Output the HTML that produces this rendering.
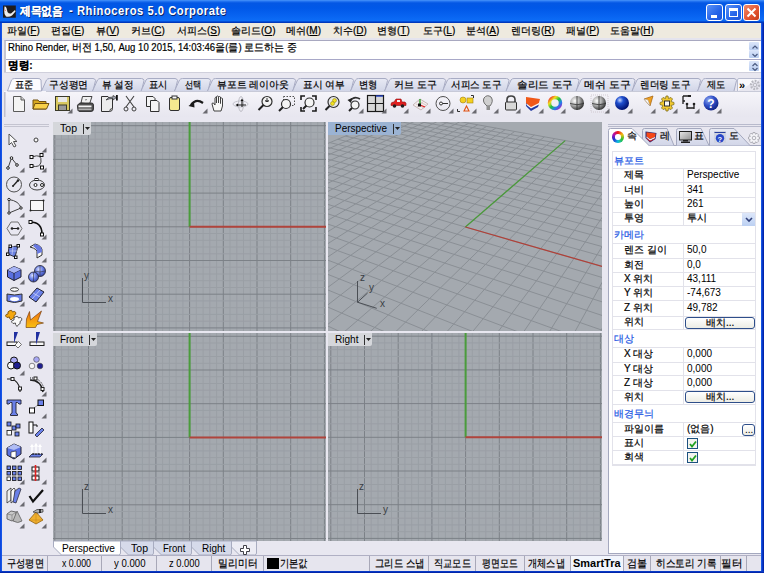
<!DOCTYPE html><html><head><meta charset="utf-8"><style>
*{margin:0;padding:0;box-sizing:border-box}
html,body{width:764px;height:573px;overflow:hidden;background:#0B4FD8;font-family:"Liberation Sans",sans-serif;font-size:11px;color:#000}
.a{position:absolute}
.t{position:absolute;white-space:nowrap;line-height:12px}
.h{-webkit-text-stroke:0.2px currentColor}
.k{font-size:10px}
svg{position:absolute;overflow:visible}
</style></head><body>
<div class="a" style="left:0px;top:0px;width:764px;height:23px;background:linear-gradient(#4C98FA 0px,#2A7AF4 1px,#0357E4 3px,#0058E8 8px,#0762F0 15px,#0C6CF6 20.5px,#0040C8 22px,#0030B0 23px)"></div>
<svg style="left:3px;top:5px" width="13" height="13" viewBox="0 0 13 13"><rect x="0" y="0.5" width="12.8" height="12.2" fill="#201C1C"/><path d="M1.5 1.5 Q3 1 3.5 3 L4.5 7 Q6 9 8 8.5 L12 5 L12.5 6.5 L9 10.5 Q6 12.5 3 11.5 Q1 10 1.2 6 Z" fill="#EDEDED"/><path d="M1.5 5 L3 5.5" stroke="#E06060" stroke-width="0.8"/></svg>
<div class="t h" id="f0" style="left:20px;top:4px;color:#fff;font-weight:bold;font-size:12px;text-shadow:1px 1px 0 #0A246A;line-height:14px;transform:scaleX(0.8958);transform-origin:0 0;">제목없음</div>
<div class="t" id="f1" style="left:68.5px;top:4px;color:#fff;font-weight:bold;font-size:12.5px;letter-spacing:0.6px;text-shadow:1px 1px 0 #0A246A;line-height:14px;transform:scaleX(0.8946);transform-origin:0 0;">- Rhinoceros 5.0 Corporate</div>
<div class="a" style="left:706px;top:4px;width:17px;height:17px;border:1px solid #fff;border-radius:3px;background:linear-gradient(135deg,#5B93F8,#2563E8 60%,#1F55D8)"><div class="a" style="left:4px;top:10px;width:6px;height:3px;background:#fff"></div></div>
<div class="a" style="left:725px;top:4px;width:17px;height:17px;border:1px solid #fff;border-radius:3px;background:linear-gradient(135deg,#5B93F8,#2563E8 60%,#1F55D8)"><div class="a" style="left:3px;top:3px;width:9px;height:9px;border:1px solid #fff;border-top-width:3px"></div></div>
<div class="a" style="left:743px;top:4px;width:17px;height:17px;border:1px solid #fff;border-radius:3px;background:linear-gradient(135deg,#F08A6A,#E2532F 60%,#C63D1C)"><svg style="left:2px;top:2px" width="11" height="11"><path d="M1.5 1.5 L9.5 9.5 M9.5 1.5 L1.5 9.5" stroke="#fff" stroke-width="2"/></svg></div>
<div class="a" style="left:0px;top:23px;width:2px;height:550px;background:linear-gradient(to right,#0840D8,#1A5CEC)"></div>
<div class="a" style="left:761px;top:23px;width:3px;height:550px;background:linear-gradient(to right,#1E64F0,#0838C8,#001C9C)"></div>
<div class="a" style="left:0px;top:571px;width:764px;height:2px;background:linear-gradient(#0A44D4,#001C9C)"></div>
<div class="a" style="left:2px;top:23px;width:759px;height:548px;background:#E8E7F0"></div>
<div class="a" style="left:2px;top:23px;width:759px;height:15px;background:#EEEADF"></div>
<div class="t h" style="left:7px;top:25px;font-size:10px">파일(<u>F</u>)</div>
<div class="t h" style="left:51px;top:25px;font-size:10px">편집(<u>E</u>)</div>
<div class="t h" style="left:96px;top:25px;font-size:10px">뷰(<u>V</u>)</div>
<div class="t h" style="left:131px;top:25px;font-size:10px">커브(<u>C</u>)</div>
<div class="t h" style="left:177px;top:25px;font-size:10px">서피스(<u>S</u>)</div>
<div class="t h" style="left:231px;top:25px;font-size:10px">솔리드(<u>O</u>)</div>
<div class="t h" style="left:286px;top:25px;font-size:10px">메쉬(<u>M</u>)</div>
<div class="t h" style="left:333px;top:25px;font-size:10px">치수(<u>D</u>)</div>
<div class="t h" style="left:377px;top:25px;font-size:10px">변형(<u>T</u>)</div>
<div class="t h" style="left:423px;top:25px;font-size:10px">도구(<u>L</u>)</div>
<div class="t h" style="left:466px;top:25px;font-size:10px">분석(<u>A</u>)</div>
<div class="t h" style="left:511px;top:25px;font-size:10px">렌더링(<u>R</u>)</div>
<div class="t h" style="left:566px;top:25px;font-size:10px">패널(<u>P</u>)</div>
<div class="t h" style="left:610px;top:25px;font-size:10px">도움말(<u>H</u>)</div>
<div class="a" style="left:2px;top:38px;width:759px;height:3px;background:#E4E4EE"></div>
<div class="a" style="left:4px;top:40px;width:757px;height:33px;background:#fff;border-left:2px solid #C6C6D2;border-top:1px solid #A8A8C0"></div>
<div class="t h" id="f2" style="left:8px;top:41px;font-size:10.5px;transform:scaleX(0.9107);transform-origin:0 0;">Rhino Render, 버전 1,50, Aug 10 2015, 14:03:46을(를) 로드하는 중</div>
<div class="a" style="left:6px;top:59px;width:755px;height:1px;background:#A8A8C8"></div>
<div class="t h" id="f3" style="left:8px;top:58.5px;font-size:10.5px;transform:scaleX(0.9608);transform-origin:0 0;"><b>명령:</b></div>
<div class="a" style="left:749px;top:42px;width:10px;height:8px;background:linear-gradient(#DCE6FA,#B8CCF0);border-radius:1px"></div>
<div class="a" style="left:749px;top:50px;width:10px;height:8px;background:linear-gradient(#DCE6FA,#B8CCF0);border-radius:1px"></div>
<div class="a" style="left:749px;top:61px;width:10px;height:10px;background:linear-gradient(#DCE6FA,#B8CCF0);border-radius:1px"></div>
<svg style="left:751px;top:44px" width="8" height="26"><path d="M1.5 4.5 L4 2 L6.5 4.5 M1.5 10 L4 12.5 L6.5 10 M1.5 22 L4 19.5 L6.5 22 M1.5 24 L4 26.5 L6.5 24" stroke="#4A5A80" fill="none" stroke-width="1.2"/></svg>
<div class="a" style="left:4px;top:72px;width:757px;height:1px;background:#D0D0DC"></div>
<div class="a" style="left:2px;top:73px;width:759px;height:45px;background:#E8E7F0"></div>
<div class="a" style="left:4px;top:91px;width:757px;height:26px;background:linear-gradient(#F6F5FA,#E7E6EF)"></div>
<div class="a" style="left:4px;top:92px;width:2px;height:25px;background:#D4D4E0;border-left:1px solid #C0C0CC"></div>
<svg style="left:0;top:0" width="764" height="120"><defs><linearGradient id="tg" x1="0" y1="0" x2="0" y2="1"><stop offset="0" stop-color="#E8EAF4"/><stop offset="1" stop-color="#D2D6E8"/></linearGradient></defs><path d="M41.5 91 L46.5 80 Q47.5 78.5 49.5 78.5 L93 78.5 Q95 78.5 95.5 80.5 L93 91" fill="url(#tg)" stroke="#A8ACC4" stroke-width="1"/><path d="M92.5 91 L97.5 80 Q98.5 78.5 100.5 78.5 L141.5 78.5 Q143.5 78.5 144.0 80.5 L141.5 91" fill="url(#tg)" stroke="#A8ACC4" stroke-width="1"/><path d="M141.0 91 L146.0 80 Q147.0 78.5 149.0 78.5 L175 78.5 Q177 78.5 177.5 80.5 L175 91" fill="url(#tg)" stroke="#A8ACC4" stroke-width="1"/><path d="M174.5 91 L179.5 80 Q180.5 78.5 182.5 78.5 L208 78.5 Q210 78.5 210.5 80.5 L208 91" fill="url(#tg)" stroke="#A8ACC4" stroke-width="1"/><path d="M207.5 91 L212.5 80 Q213.5 78.5 215.5 78.5 L293 78.5 Q295 78.5 295.5 80.5 L293 91" fill="url(#tg)" stroke="#A8ACC4" stroke-width="1"/><path d="M292.5 91 L297.5 80 Q298.5 78.5 300.5 78.5 L351 78.5 Q353 78.5 353.5 80.5 L351 91" fill="url(#tg)" stroke="#A8ACC4" stroke-width="1"/><path d="M350.5 91 L355.5 80 Q356.5 78.5 358.5 78.5 L385 78.5 Q387 78.5 387.5 80.5 L385 91" fill="url(#tg)" stroke="#A8ACC4" stroke-width="1"/><path d="M384.5 91 L389.5 80 Q390.5 78.5 392.5 78.5 L443 78.5 Q445 78.5 445.5 80.5 L443 91" fill="url(#tg)" stroke="#A8ACC4" stroke-width="1"/><path d="M442.5 91 L447.5 80 Q448.5 78.5 450.5 78.5 L506.5 78.5 Q508.5 78.5 509.0 80.5 L506.5 91" fill="url(#tg)" stroke="#A8ACC4" stroke-width="1"/><path d="M506.0 91 L511.0 80 Q512.0 78.5 514.0 78.5 L576.5 78.5 Q578.5 78.5 579.0 80.5 L576.5 91" fill="url(#tg)" stroke="#A8ACC4" stroke-width="1"/><path d="M576.0 91 L581.0 80 Q582.0 78.5 584.0 78.5 L632.5 78.5 Q634.5 78.5 635.0 80.5 L632.5 91" fill="url(#tg)" stroke="#A8ACC4" stroke-width="1"/><path d="M632.0 91 L637.0 80 Q638.0 78.5 640.0 78.5 L698 78.5 Q700 78.5 700.5 80.5 L698 91" fill="url(#tg)" stroke="#A8ACC4" stroke-width="1"/><path d="M697.5 91 L702.5 80 Q703.5 78.5 705.5 78.5 L734 78.5 Q736 78.5 736.5 80.5 L734 91" fill="url(#tg)" stroke="#A8ACC4" stroke-width="1"/><path d="M7.5 91 L11.5 80 Q12.5 78.5 14.5 78.5 L38 78.5 Q40.5 78.5 41 80 L41.5 91 Z" fill="#FBFBFE" stroke="#A8ACC4" stroke-width="1"/><path d="M737.5 91 L737.5 80 Q737.5 78.5 739 78.5 L761 78.5" fill="#F8F8FC" stroke="#B8BCD0"/><line x1="46" y1="91.5" x2="761" y2="91.5" stroke="#C8CAD8"/></svg>
<div class="t h" id="f4" style="left:15px;top:79px;font-size:10px;transform:scaleX(0.9250);transform-origin:0 0;">표준</div>
<div class="t h" id="f5" style="left:48.5px;top:79px;font-size:10px;transform:scaleX(0.9750);transform-origin:0 0;">구성평면</div>
<div class="t h" id="f6" style="left:102px;top:79px;font-size:10px;transform:scaleX(0.9609);transform-origin:0 0;">뷰 설정</div>
<div class="t h" id="f7" style="left:149px;top:79px;font-size:10px;transform:scaleX(0.9250);transform-origin:0 0;">표시</div>
<div class="t h" id="f8" style="left:185px;top:79px;font-size:10px;transform:scaleX(0.8250);transform-origin:0 0;">선택</div>
<div class="t h" id="f9" style="left:217px;top:79px;font-size:10px;transform:scaleX(0.9824);transform-origin:0 0;">뷰포트 레이아웃</div>
<div class="t h" id="f10" style="left:303px;top:79px;font-size:10px;transform:scaleX(0.9701);transform-origin:0 0;">표시 여부</div>
<div class="t h" id="f11" style="left:359px;top:79px;font-size:10px;transform:scaleX(0.9250);transform-origin:0 0;">변형</div>
<div class="t h" id="f12" style="left:394px;top:79px;font-size:10px;transform:scaleX(0.9934);transform-origin:0 0;">커브 도구</div>
<div class="t h" id="f13" style="left:451px;top:79px;font-size:10px;transform:scaleX(0.9568);transform-origin:0 0;">서피스 도구</div>
<div class="t h" id="f14" style="left:517px;top:79px;font-size:10px;transform:scaleX(1.0610);transform-origin:0 0;">솔리드 도구</div>
<div class="t h" id="f15" style="left:584px;top:79px;font-size:10px;transform:scaleX(1.0869);transform-origin:0 0;">메쉬 도구</div>
<div class="t h" id="f16" style="left:640px;top:79px;font-size:10px;transform:scaleX(0.9568);transform-origin:0 0;">렌더링 도구</div>
<div class="t h" id="f17" style="left:707px;top:79px;font-size:10px;transform:scaleX(0.9250);transform-origin:0 0;">제도</div>
<div class="t" style="left:739px;top:79px;font-size:11px"><b>»</b></div>
<svg style="left:749px;top:79px" width="12" height="12"><circle cx="6" cy="6" r="4" fill="none" stroke="#B8B8C0" stroke-width="2.4" stroke-dasharray="1.8 1.2"/><circle cx="6" cy="6" r="1.8" fill="none" stroke="#B8B8C0"/></svg>
<svg style="left:0;top:0" width="0" height="0"><defs><radialGradient id="sg" cx="0.35" cy="0.35" r="0.7"><stop offset="0" stop-color="#FFFFFF"/><stop offset="0.5" stop-color="#A8A8A8"/><stop offset="1" stop-color="#303030"/></radialGradient><radialGradient id="bsg" cx="0.35" cy="0.3" r="0.7"><stop offset="0" stop-color="#C8D8FF"/><stop offset="0.35" stop-color="#2050D0"/><stop offset="1" stop-color="#001070"/></radialGradient><radialGradient id="hg" cx="0.35" cy="0.3" r="0.75"><stop offset="0" stop-color="#90A8F0"/><stop offset="0.5" stop-color="#3050C8"/><stop offset="1" stop-color="#102080"/></radialGradient><linearGradient id="cwh" x1="0" y1="0" x2="1" y2="1"><stop offset="0" stop-color="#F02020"/><stop offset="0.25" stop-color="#F0E020"/><stop offset="0.5" stop-color="#20C040"/><stop offset="0.75" stop-color="#2080F0"/><stop offset="1" stop-color="#A020C0"/></linearGradient></defs></svg>
<svg style="left:11px;top:95px" width="18" height="18" viewBox="0 0 18 18"><path d="M2.5 1.5 H10 L13.5 5 V16.5 H2.5 Z" fill="#F4F4F4" stroke="#5A5A5A"/><path d="M10 1.5 V5 H13.5" fill="#D0D0D0" stroke="#5A5A5A"/></svg>
<svg style="left:32px;top:95px" width="18" height="18" viewBox="0 0 18 18"><path d="M1 5 H6 L7 6.5 H14 V14 H1 Z" fill="#D8A820" stroke="#705010"/><path d="M3 8.5 H17 L14.5 14 H1 Z" fill="#F8D048" stroke="#705010"/></svg>
<svg style="left:54px;top:95px" width="18" height="18" viewBox="0 0 18 18"><rect x="1.5" y="1.5" width="14" height="14" fill="#D8C860" stroke="#3A3A2A"/><rect x="4" y="2" width="9" height="5" fill="#E8E8E8"/><rect x="4.5" y="10" width="8" height="5.5" fill="#9A9A9A" stroke="#3A3A2A"/></svg>
<svg style="left:77px;top:95px" width="18" height="18" viewBox="0 0 18 18"><path d="M4 8 L5.5 1.5 H15 L12.5 9 Z" fill="#F0F0F0" stroke="#303030" stroke-width="0.9"/><path d="M8 5 L10 4.5" stroke="#808080" stroke-width="1.2"/><path d="M1.5 9 Q0 10 0.5 12 L1 15.5 Q1.5 16.5 3 16.5 H14 Q16.5 16.5 16.5 14 V10 Q16.5 8 14.5 8 H3 Z" fill="#505050" stroke="#202020" stroke-width="0.8"/><rect x="1.5" y="10.5" width="13" height="1.8" fill="#F4F4F4"/><rect x="1.5" y="13.5" width="13" height="1.6" fill="#B0B0B0"/></svg>
<svg style="left:100px;top:95px" width="18" height="18" viewBox="0 0 18 18"><path d="M1.5 1.5 H8 L9 3 H12.5 V13.5 Q12.5 16.5 9.5 16.5 H1.5 Z" fill="#ECECEC" stroke="#303030"/><path d="M12.5 13.5 Q10 13 9.5 16.5" fill="#D8D8D8" stroke="#303030" stroke-width="0.8"/><path d="M6 5 Q8 1.5 13 2 V0.5 L16.5 2.5 L13 5 V3.5 Q9 3.5 6 5Z" fill="#A0A4B0" stroke="#303030" stroke-width="0.7"/><rect x="16" y="0" width="1.8" height="5.5" fill="#101010"/></svg>
<svg style="left:123px;top:95px" width="18" height="18" viewBox="0 0 18 18"><path d="M3 1 L11 12 M11 1 L3 12" stroke="#404040" stroke-width="1.1"/><circle cx="3" cy="14" r="2" fill="none" stroke="#404040"/><circle cx="11" cy="14" r="2" fill="none" stroke="#404040"/></svg>
<svg style="left:145px;top:95px" width="18" height="18" viewBox="0 0 18 18"><path d="M1.5 1.5 H8 L10 3.5 V11.5 H1.5Z" fill="#F4F4F4" stroke="#303030"/><path d="M5.5 5.5 H12 L14 7.5 V16.5 H5.5Z" fill="#F4F4F4" stroke="#303030"/></svg>
<svg style="left:168px;top:95px" width="18" height="18" viewBox="0 0 18 18"><rect x="1.5" y="2.5" width="10" height="13" rx="1.5" fill="#F4E890" stroke="#303030"/><rect x="4" y="1" width="5" height="3" fill="#F8F8F8" stroke="#303030"/></svg>
<svg style="left:188px;top:95px" width="18" height="18" viewBox="0 0 18 18"><path d="M3 10 Q8 3 15 8" stroke="#1A1A1A" stroke-width="2.2" fill="none"/><path d="M0.5 11 L6 6.5 L6.5 12.5 Z" fill="#1A1A1A"/></svg>
<svg style="left:210px;top:95px" width="18" height="18" viewBox="0 0 18 18"><path d="M4 16 L2 9 Q2 7.5 3.5 8 L5 10 V3 Q5.5 1.5 6.5 3 V8 V1.5 Q7.5 0.5 8.5 1.5 V8 V2 Q9.5 1 10.5 2 V8.5 V3.5 Q11.5 2.5 12.5 3.5 V11 L11 16 Z" fill="#F8F8F8" stroke="#404040"/></svg>
<svg style="left:232px;top:95px" width="18" height="18" viewBox="0 0 18 18"><ellipse cx="8.5" cy="9" rx="7.5" ry="3" fill="none" stroke="#C0C0C8" stroke-width="0.9"/><ellipse cx="9" cy="9" rx="2.5" ry="7.5" fill="none" stroke="#B8B8C0" stroke-width="0.9"/><path d="M10 5 V12 M5 10 H14" stroke="#202020" stroke-width="1.1"/><path d="M8.5 6 L10 3.5 L11.5 6Z M6 8.5 L3.5 10 L6 11.5Z" fill="#101010"/></svg>
<svg style="left:257px;top:95px" width="18" height="18" viewBox="0 0 18 18"><circle cx="10" cy="6.5" r="5" fill="#F4F4F4" stroke="#303030" stroke-width="1.2"/><path d="M6.5 10 L1.5 15" stroke="#202020" stroke-width="2"/><path d="M8 6 H12 M10 3 V7 M8.5 5.5 L10 7 L11.5 5.5" stroke="#303030" fill="none"/></svg>
<svg style="left:278px;top:95px" width="18" height="18" viewBox="0 0 18 18"><rect x="5.5" y="1.5" width="11" height="9" fill="none" stroke="#505050" stroke-dasharray="1.5 1.5"/><circle cx="8" cy="9" r="4.5" fill="#F4F4F4" stroke="#303030" stroke-width="1.2"/><path d="M5 12 L1 16" stroke="#202020" stroke-width="2"/></svg>
<svg style="left:300px;top:95px" width="18" height="18" viewBox="0 0 18 18"><path d="M1 5 V1 H5 M12 1 H16 V5 M16 12 V16 H12 M5 16 H1 V12" stroke="#1A1A1A" stroke-width="1.6" fill="none"/><circle cx="9.5" cy="7.5" r="4.5" fill="#F4F4F4" stroke="#303030" stroke-width="1.2"/><path d="M6.5 10.5 L3 14" stroke="#202020" stroke-width="2"/></svg>
<svg style="left:324px;top:95px" width="18" height="18" viewBox="0 0 18 18"><circle cx="9.5" cy="7" r="5.5" fill="#E8E8E8" stroke="#303030" stroke-width="1.2"/><circle cx="10.5" cy="5.5" r="2" fill="#F0E020" stroke="#908010" stroke-width="0.5"/><circle cx="8.5" cy="8.5" r="2" fill="#F0E020" stroke="#908010" stroke-width="0.5"/><path d="M5.5 11 L1.5 15" stroke="#202020" stroke-width="2"/></svg>
<svg style="left:346px;top:95px" width="18" height="18" viewBox="0 0 18 18"><path d="M4 6 Q8 0.5 14 4" stroke="#303030" stroke-width="1.6" fill="none"/><path d="M1.5 5 L6 3 L5 8 Z" fill="#202020"/><circle cx="9" cy="10" r="4" fill="#F4F4F4" stroke="#303030" stroke-width="1.2"/><path d="M6 13 L3 16" stroke="#202020" stroke-width="2"/></svg>
<svg style="left:367px;top:95px" width="18" height="18" viewBox="0 0 18 18"><rect x="0.5" y="0.5" width="16" height="16" fill="#D8D8D8" stroke="#1A1A1A" stroke-width="1.2"/><path d="M8.5 0.5 V16.5 M0.5 8.5 H16.5" stroke="#1A1A1A" stroke-width="1.2"/><line x1="9" y1="1" x2="16" y2="1" stroke="#2040C0" stroke-width="1.4"/></svg>
<svg style="left:390px;top:95px" width="18" height="18" viewBox="0 0 18 18"><path d="M1 9 Q1 7 4 7 L6 4 H11 L12 7 H15 Q16.5 7.5 16 10.5 H1 Z" fill="#E02020" stroke="#901010" stroke-width="0.6"/><circle cx="4.5" cy="11" r="1.8" fill="#202020"/><circle cx="12.5" cy="11" r="1.8" fill="#202020"/><rect x="7" y="5" width="3" height="2" fill="#F0F0F0"/></svg>
<svg style="left:412px;top:95px" width="18" height="18" viewBox="0 0 18 18"><path d="M1 10 L8 4 L16 9 L9 15 Z" fill="#F4F0F0" stroke="#C8B8B8"/><path d="M4 9 L12 13 M6 6 L14 10 M5 12 L12 6" stroke="#D0B0B0" stroke-width="0.6"/><path d="M8 10 V4" stroke="#20A020" stroke-width="1.3"/><path d="M8 10 L13 12" stroke="#E02020" stroke-width="1.3"/><rect x="6" y="8.5" width="3" height="3" fill="#101010"/></svg>
<svg style="left:435px;top:95px" width="18" height="18" viewBox="0 0 18 18"><circle cx="8" cy="8.5" r="7" fill="none" stroke="#505050"/><circle cx="6" cy="8.5" r="1.5" fill="#F8F8F8" stroke="#303030"/><path d="M7.5 8.5 H13" stroke="#303030"/></svg>
<svg style="left:457px;top:95px" width="18" height="18" viewBox="0 0 18 18"><circle cx="6" cy="5" r="3" fill="#F4D020" stroke="#A08010" stroke-width="0.6"/><rect x="10" y="3" width="6" height="5" fill="#F4D020" stroke="#A08010" stroke-width="0.6"/><path d="M7 16 L9.5 11 L12 16 Z" fill="none" stroke="#E05010" stroke-width="1.1"/><path d="M14 0.5 H16.5 V3 M0.5 14 V16.5 H3" stroke="#303030" fill="none"/></svg>
<svg style="left:481px;top:95px" width="18" height="18" viewBox="0 0 18 18"><path d="M6 11 Q1 7 3 3 Q6 -1 10 2 Q13 6 9 11 Z" fill="#D0D0D0" stroke="#707070"/><rect x="5.5" y="11" width="3.5" height="4" fill="#909090"/></svg>
<svg style="left:504px;top:95px" width="18" height="18" viewBox="0 0 18 18"><path d="M3 7 V4.5 Q3 1 7 1 Q11 1 11 4.5 V7" fill="none" stroke="#404040" stroke-width="1.6"/><rect x="1.5" y="7" width="11" height="8" rx="1" fill="#D8D8D8" stroke="#303030"/></svg>
<svg style="left:525px;top:95px" width="18" height="18" viewBox="0 0 18 18"><path d="M1 2 L15 4 L13 11 L6 15 L1 9 Z" fill="#F05818"/><path d="M1 8 L6 13 L14 9 L13 12 L6 16 L1 11 Z" fill="#2038A0"/><path d="M1.5 8.5 L6 12 L14 8 L14 9.5 L6 13.5 L1.5 10 Z" fill="#F8F8F8"/></svg>
<svg style="left:547px;top:95px" width="18" height="18" viewBox="0 0 18 18"><circle cx="8" cy="8" r="5.5" fill="none" stroke="url(#cwh)" stroke-width="3.5"/></svg>
<svg style="left:569px;top:95px" width="18" height="18" viewBox="0 0 18 18"><circle cx="8" cy="8" r="7" fill="url(#sg)"/><path d="M8 1 V15 M1 8.5 Q8 11 15 8.5" stroke="#303030" fill="none" stroke-width="0.8"/></svg>
<svg style="left:591px;top:95px" width="18" height="18" viewBox="0 0 18 18"><rect x="0" y="0" width="17" height="17" fill="none" stroke="#D0C8D0" stroke-dasharray="1 1"/><circle cx="8" cy="8" r="7" fill="url(#sg)"/><path d="M8 1 V15 M1 8.5 Q8 11 15 8.5" stroke="#303030" fill="none" stroke-width="0.8"/></svg>
<svg style="left:614px;top:95px" width="18" height="18" viewBox="0 0 18 18"><circle cx="8" cy="8" r="7" fill="url(#bsg)"/></svg>
<svg style="left:642px;top:95px" width="18" height="18" viewBox="0 0 18 18"><path d="M2 4 L11 1 L8 11 Z" fill="#F0A020" stroke="#A06010" stroke-width="0.7"/><path d="M2 4 L8 11 L6 5 Z" fill="#FFFFFF" stroke="#A0A0A0" stroke-width="0.5"/></svg>
<svg style="left:657px;top:95px" width="18" height="18" viewBox="0 0 18 18"><path d="M9 1 L11 1 L11.5 3.5 L14 2.5 L15.5 4 L14 6.5 L17 7.5 V9.5 L14 10.5 L15.5 13 L14 14.5 L11.5 13.5 L11 16 H9 L8.5 13.5 L6 14.5 L4.5 13 L6 10.5 L3 9.5 V7.5 L6 6.5 L4.5 4 L6 2.5 L8.5 3.5Z" fill="#F0C830" stroke="#807020" stroke-width="0.8"/><rect x="7.5" y="6" width="5" height="5" fill="#F8F8F8" stroke="#303030"/></svg>
<svg style="left:681px;top:95px" width="18" height="18" viewBox="0 0 18 18"><path d="M2 1 V9 M2 1 H8 M2 6 H4 M6 13 H13" stroke="#202020" stroke-width="1.3" fill="none"/><path d="M6 9 V14 M13 9 V14" stroke="#202020" stroke-width="1.3"/><circle cx="6" cy="9" r="1.3" fill="#202020"/><circle cx="13" cy="9" r="1.3" fill="#202020"/><rect x="7" y="0" width="3" height="2" fill="#202020"/></svg>
<svg style="left:703px;top:95px" width="18" height="18" viewBox="0 0 18 18"><circle cx="8" cy="8" r="7.5" fill="url(#hg)"/><text x="4.2" y="13" font-size="12" font-weight="bold" fill="#fff" font-family="Liberation Sans">?</text></svg>
<svg style="left:66.5px;top:108px" width="6" height="6"><path d="M5.5 0.5 V5.5 H0.5 Z" fill="#6A6A70"/></svg>
<svg style="left:201.5px;top:108px" width="6" height="6"><path d="M5.5 0.5 V5.5 H0.5 Z" fill="#6A6A70"/></svg>
<svg style="left:357.5px;top:108px" width="6" height="6"><path d="M5.5 0.5 V5.5 H0.5 Z" fill="#6A6A70"/></svg>
<svg style="left:380.5px;top:108px" width="6" height="6"><path d="M5.5 0.5 V5.5 H0.5 Z" fill="#6A6A70"/></svg>
<svg style="left:402.5px;top:108px" width="6" height="6"><path d="M5.5 0.5 V5.5 H0.5 Z" fill="#6A6A70"/></svg>
<svg style="left:424.5px;top:108px" width="6" height="6"><path d="M5.5 0.5 V5.5 H0.5 Z" fill="#6A6A70"/></svg>
<svg style="left:447.5px;top:108px" width="6" height="6"><path d="M5.5 0.5 V5.5 H0.5 Z" fill="#6A6A70"/></svg>
<svg style="left:470.5px;top:108px" width="6" height="6"><path d="M5.5 0.5 V5.5 H0.5 Z" fill="#6A6A70"/></svg>
<svg style="left:492.5px;top:108px" width="6" height="6"><path d="M5.5 0.5 V5.5 H0.5 Z" fill="#6A6A70"/></svg>
<svg style="left:514.5px;top:108px" width="6" height="6"><path d="M5.5 0.5 V5.5 H0.5 Z" fill="#6A6A70"/></svg>
<svg style="left:537.5px;top:108px" width="6" height="6"><path d="M5.5 0.5 V5.5 H0.5 Z" fill="#6A6A70"/></svg>
<svg style="left:559.5px;top:108px" width="6" height="6"><path d="M5.5 0.5 V5.5 H0.5 Z" fill="#6A6A70"/></svg>
<svg style="left:603.5px;top:108px" width="6" height="6"><path d="M5.5 0.5 V5.5 H0.5 Z" fill="#6A6A70"/></svg>
<svg style="left:626.5px;top:108px" width="6" height="6"><path d="M5.5 0.5 V5.5 H0.5 Z" fill="#6A6A70"/></svg>
<svg style="left:649.5px;top:108px" width="6" height="6"><path d="M5.5 0.5 V5.5 H0.5 Z" fill="#6A6A70"/></svg>
<svg style="left:671.5px;top:108px" width="6" height="6"><path d="M5.5 0.5 V5.5 H0.5 Z" fill="#6A6A70"/></svg>
<svg style="left:693.5px;top:108px" width="6" height="6"><path d="M5.5 0.5 V5.5 H0.5 Z" fill="#6A6A70"/></svg>
<svg style="left:715.5px;top:108px" width="6" height="6"><path d="M5.5 0.5 V5.5 H0.5 Z" fill="#6A6A70"/></svg>
<div class="a" style="left:2px;top:118px;width:51px;height:437px;background:#E8E7F0"></div>
<div class="a" style="left:4px;top:124px;width:45px;height:1px;background:#C4C4D0"></div>
<div class="a" style="left:4px;top:126px;width:45px;height:1px;background:#C4C4D0"></div>
<svg style="left:0;top:0" width="0" height="0"><defs><radialGradient id="lsph" cx="0.4" cy="0.35" r="0.7"><stop offset="0" stop-color="#D8E0FF"/><stop offset="0.5" stop-color="#6A80E8"/><stop offset="1" stop-color="#3040A0"/></radialGradient></defs></svg>
<svg style="left:6px;top:133px" width="18" height="18" viewBox="0 0 18 18"><path d="M3 1 L3 12 L5.5 9.5 L8 14 L10 13 L7.5 8.5 L11 8.5 Z" fill="#F8F8F8" stroke="#505050"/></svg>
<svg style="left:28px;top:133px" width="18" height="18" viewBox="0 0 18 18"><circle cx="8" cy="7" r="2" fill="#F8F8F8" stroke="#404040"/></svg>
<svg style="left:41px;top:146.5px" width="6" height="6"><path d="M5.5 0.5 V5.5 H0.5 Z" fill="#6A6A70"/></svg>
<svg style="left:6px;top:153px" width="18" height="18" viewBox="0 0 18 18"><path d="M2 15 L5.5 5 L11 12" fill="none" stroke="#404040"/><circle cx="2" cy="15" r="1.3" fill="#fff" stroke="#202020"/><circle cx="5.5" cy="5" r="1.3" fill="#fff" stroke="#202020"/><circle cx="11" cy="12" r="1.3" fill="#fff" stroke="#202020"/></svg>
<svg style="left:28px;top:153px" width="18" height="18" viewBox="0 0 18 18"><path d="M4 4 Q14 0 13 9 Q12 15 4 13" fill="none" stroke="#404040"/><rect x="2" y="2.5" width="3" height="3" fill="#fff" stroke="#101010"/><rect x="12" y="0.5" width="3" height="3" fill="#fff" stroke="#101010"/><rect x="2" y="11.5" width="3" height="3" fill="#fff" stroke="#101010"/><rect x="12.5" y="13" width="3" height="3" fill="#fff" stroke="#101010"/></svg>
<svg style="left:19px;top:166.5px" width="6" height="6"><path d="M5.5 0.5 V5.5 H0.5 Z" fill="#6A6A70"/></svg>
<svg style="left:41px;top:166.5px" width="6" height="6"><path d="M5.5 0.5 V5.5 H0.5 Z" fill="#6A6A70"/></svg>
<svg style="left:6px;top:176px" width="18" height="18" viewBox="0 0 18 18"><circle cx="8" cy="8.5" r="7.5" fill="none" stroke="#505050"/><path d="M7 10 L12 4.5" stroke="#202020" stroke-width="1.3"/><circle cx="12" cy="4.5" r="1.2" fill="#202020"/><circle cx="7" cy="10" r="1" fill="#202020"/></svg>
<svg style="left:28px;top:176px" width="18" height="18" viewBox="0 0 18 18"><ellipse cx="9" cy="9" rx="7.5" ry="5" fill="none" stroke="#404040"/><circle cx="7.5" cy="9" r="1.5" fill="#fff" stroke="#202020"/><circle cx="14" cy="9" r="1.5" fill="#fff" stroke="#202020"/><rect x="7" y="2.5" width="3" height="2" fill="#fff" stroke="#202020"/></svg>
<svg style="left:19px;top:189.5px" width="6" height="6"><path d="M5.5 0.5 V5.5 H0.5 Z" fill="#6A6A70"/></svg>
<svg style="left:41px;top:189.5px" width="6" height="6"><path d="M5.5 0.5 V5.5 H0.5 Z" fill="#6A6A70"/></svg>
<svg style="left:6px;top:198px" width="18" height="18" viewBox="0 0 18 18"><path d="M3 1.5 Q13 3 15 10 L3 15 Z" fill="none" stroke="#404040"/><circle cx="3" cy="1.5" r="1.2" fill="#fff" stroke="#202020"/><circle cx="15" cy="10" r="1.2" fill="#fff" stroke="#202020"/><circle cx="3" cy="15" r="1.2" fill="#fff" stroke="#202020"/></svg>
<svg style="left:28px;top:198px" width="18" height="18" viewBox="0 0 18 18"><rect x="2.5" y="2.5" width="13" height="10" fill="#F8F8F8" stroke="#404040"/><circle cx="2.5" cy="12.5" r="1" fill="#202020"/><circle cx="15.5" cy="2.5" r="1" fill="#202020"/></svg>
<svg style="left:19px;top:211.5px" width="6" height="6"><path d="M5.5 0.5 V5.5 H0.5 Z" fill="#6A6A70"/></svg>
<svg style="left:41px;top:211.5px" width="6" height="6"><path d="M5.5 0.5 V5.5 H0.5 Z" fill="#6A6A70"/></svg>
<svg style="left:6px;top:220px" width="18" height="18" viewBox="0 0 18 18"><path d="M5 2 H12 L16 8.5 L12 15 H5 L1 8.5 Z" fill="none" stroke="#707070"/><path d="M6 8.5 H12" stroke="#202020"/><circle cx="6" cy="8.5" r="1.3" fill="#202020"/><circle cx="12" cy="8.5" r="1.3" fill="#202020"/></svg>
<svg style="left:28px;top:220px" width="18" height="18" viewBox="0 0 18 18"><path d="M2 2 Q14 2 14 14" fill="none" stroke="#101010" stroke-width="1.6"/><rect x="1" y="0.5" width="3" height="3" fill="#fff" stroke="#101010"/><rect x="12.5" y="13" width="3" height="3" fill="#fff" stroke="#101010"/></svg>
<svg style="left:19px;top:233.5px" width="6" height="6"><path d="M5.5 0.5 V5.5 H0.5 Z" fill="#6A6A70"/></svg>
<svg style="left:41px;top:233.5px" width="6" height="6"><path d="M5.5 0.5 V5.5 H0.5 Z" fill="#6A6A70"/></svg>
<svg style="left:6px;top:243px" width="18" height="18" viewBox="0 0 18 18"><path d="M3 4 L12 3 L9 14 L2 11 Z" fill="#6A80E0" stroke="#303040"/><path d="M4 8 L11 8 M7 3 L6 12" stroke="#C0C8F0" stroke-width="0.8"/><rect x="3" y="2" width="2.5" height="2.5" fill="#fff" stroke="#101010"/><rect x="11" y="1.5" width="2.5" height="2.5" fill="#fff" stroke="#101010"/><rect x="0.5" y="10" width="2.5" height="2.5" fill="#fff" stroke="#101010"/><rect x="8.5" y="13" width="2.5" height="2.5" fill="#fff" stroke="#101010"/></svg>
<svg style="left:28px;top:243px" width="18" height="18" viewBox="0 0 18 18"><path d="M2 4 L7 1 Q15 3 14 9 L14 12 L9 15 L9 10 Q10 6 2 4Z" fill="#F8F8F8" stroke="#303030"/><path d="M7 1 Q15 3 14 9 L9 11 Q10 6 5 3Z" fill="#6878E0"/></svg>
<svg style="left:19px;top:256.5px" width="6" height="6"><path d="M5.5 0.5 V5.5 H0.5 Z" fill="#6A6A70"/></svg>
<svg style="left:41px;top:256.5px" width="6" height="6"><path d="M5.5 0.5 V5.5 H0.5 Z" fill="#6A6A70"/></svg>
<svg style="left:6px;top:265px" width="18" height="18" viewBox="0 0 18 18"><path d="M1.5 5 L8 1.5 L15 4.5 L15 12 L8 15.5 L1.5 12 Z" fill="#5A70E0" stroke="#202030"/><path d="M1.5 5 L8 8 L15 4.5 M8 8 V15.5" stroke="#202030" fill="none"/><path d="M1.5 5 L8 1.5 L15 4.5 L8 8Z" fill="#A8B4F4"/></svg>
<svg style="left:28px;top:265px" width="18" height="18" viewBox="0 0 18 18"><circle cx="12" cy="6" r="5.5" fill="url(#lsph)" stroke="#202030" stroke-width="0.8"/><circle cx="5.5" cy="12" r="5" fill="url(#lsph)" stroke="#202030" stroke-width="0.8"/><path d="M12 0.5 V11 M6.5 6 Q12 8 17 6 M5.5 7 V17" stroke="#303040" stroke-width="0.6" fill="none"/></svg>
<svg style="left:19px;top:278.5px" width="6" height="6"><path d="M5.5 0.5 V5.5 H0.5 Z" fill="#6A6A70"/></svg>
<svg style="left:41px;top:278.5px" width="6" height="6"><path d="M5.5 0.5 V5.5 H0.5 Z" fill="#6A6A70"/></svg>
<svg style="left:6px;top:287px" width="18" height="18" viewBox="0 0 18 18"><ellipse cx="8.5" cy="2.5" rx="4" ry="1.8" fill="#fff" stroke="#303030"/><path d="M1 7 Q8.5 9 16 7 V14 Q8.5 17 1 14 Z" fill="#6A80E8" stroke="#303030"/><ellipse cx="8.5" cy="12" rx="4.5" ry="2" fill="#fff"/></svg>
<svg style="left:28px;top:287px" width="18" height="18" viewBox="0 0 18 18"><path d="M1 10 L9 1 L16 5 L8 15 Z" fill="#6A80E8" stroke="#202030"/><path d="M5 6 L12 10 M4 12 L12 3" stroke="#C8D0F8" stroke-width="0.8"/></svg>
<svg style="left:19px;top:300.5px" width="6" height="6"><path d="M5.5 0.5 V5.5 H0.5 Z" fill="#6A6A70"/></svg>
<svg style="left:41px;top:300.5px" width="6" height="6"><path d="M5.5 0.5 V5.5 H0.5 Z" fill="#6A6A70"/></svg>
<svg style="left:6px;top:310px" width="18" height="18" viewBox="0 0 18 18"><path d="M4 0.5 Q6 -0.5 6.5 2 Q8.5 0.5 9.8 2.5 Q10.5 4.5 8 5.5 Q9 8 6.5 8.5 L5 10 Q3 8.5 3.5 7 Q0.5 8.5 -0.5 6 Q-0.5 4 2 4 Q1 1.5 4 0.5Z" fill="#F4A810" stroke="#704808" stroke-width="0.8"/><path d="M10 6.5 Q12 5.5 12.5 8 Q14.5 6.5 15.8 8.5 Q16.5 10.5 14 11.5 Q15 14 12.5 14.5 L11 16.5 Q9 14.5 9.5 13 Q6.5 14.5 5.5 12 Q5.5 10 8 10 Q7 7.5 10 6.5Z" fill="#FAFAFA" stroke="#303030" stroke-width="0.8"/></svg>
<svg style="left:28px;top:310px" width="18" height="18" viewBox="0 0 18 18"><defs><linearGradient id="expg" x1="0" y1="0" x2="0" y2="1"><stop offset="0" stop-color="#F07010"/><stop offset="1" stop-color="#F8C010"/></linearGradient></defs><path d="M-2 17.5 L-1.5 9 L1.5 1.5 L2.5 10 L6 7 L13.5 1 L9.5 11.5 L15.5 13 L9 14.5 L7.5 17.5 Z" fill="url(#expg)" stroke="#683000" stroke-width="0.6"/></svg>
<svg style="left:6px;top:332px" width="18" height="18" viewBox="0 0 18 18"><rect x="1" y="10" width="10" height="3.5" fill="#F8F8F8" stroke="#202020"/><path d="M8 0 L12 0 L8 11 Z" fill="#2030A0"/><path d="M9 13 L12.5 9.5 L15.5 12.5 L12 16 Z" fill="#F8F8F8" stroke="#505050" stroke-width="0.8"/></svg>
<svg style="left:28px;top:332px" width="18" height="18" viewBox="0 0 18 18"><rect x="2" y="10" width="14" height="3.5" fill="#F8F8F8" stroke="#202020"/><path d="M8 0 L12 0 L8 13 Z" fill="#2030A0"/></svg>
<svg style="left:6px;top:356px" width="18" height="18" viewBox="0 0 18 18"><circle cx="8" cy="4.5" r="3.5" fill="#A8A8F4" stroke="#101010"/><circle cx="5" cy="9.5" r="3.5" fill="#F8F8F8" stroke="#101010"/><circle cx="11" cy="9.5" r="3.5" fill="#202090" stroke="#101010"/></svg>
<svg style="left:28px;top:356px" width="18" height="18" viewBox="0 0 18 18"><circle cx="8.5" cy="3.5" r="2.8" fill="#A8A8F4" stroke="#404040" stroke-width="0.6"/><circle cx="4" cy="10" r="2.8" fill="#F8F8F8" stroke="#404040" stroke-width="0.6"/><circle cx="12" cy="10" r="2.8" fill="#202090" stroke="#404040" stroke-width="0.6"/></svg>
<svg style="left:19px;top:369.5px" width="6" height="6"><path d="M5.5 0.5 V5.5 H0.5 Z" fill="#6A6A70"/></svg>
<svg style="left:6px;top:377px" width="18" height="18" viewBox="0 0 18 18"><path d="M1 2 H6 Q12 4 14 12 V15" fill="none" stroke="#202020" stroke-width="1.2"/><rect x="5" y="0.5" width="3" height="3" fill="#fff" stroke="#202020"/><rect x="12.5" y="10" width="3" height="3" fill="#fff" stroke="#202020"/></svg>
<svg style="left:28px;top:377px" width="18" height="18" viewBox="0 0 18 18"><path d="M2 3 Q13 3 15 15" fill="none" stroke="#202020" stroke-width="1.6"/><path d="M2 1 H6 Q14 3 16 12" fill="none" stroke="#202020" stroke-dasharray="1 1"/><rect x="6" y="0" width="3" height="3" fill="#fff" stroke="#202020"/><rect x="13" y="10.5" width="3" height="3" fill="#fff" stroke="#202020"/></svg>
<svg style="left:41px;top:390.5px" width="6" height="6"><path d="M5.5 0.5 V5.5 H0.5 Z" fill="#6A6A70"/></svg>
<svg style="left:6px;top:399px" width="18" height="18" viewBox="0 0 18 18"><path d="M1 1 H15 V5 H13 L11.5 3.5 H10 V14 L11.5 15 V16.5 H4.5 V15 L6 14 V3.5 H4.5 L3 5 H1 Z" fill="#6A80E8" stroke="#202030" stroke-width="0.9"/></svg>
<svg style="left:28px;top:399px" width="18" height="18" viewBox="0 0 18 18"><rect x="1.5" y="9" width="5" height="5" fill="#fff" stroke="#101010"/><rect x="10" y="1" width="5.5" height="5.5" fill="#6A80E8" stroke="#101010"/><path d="M6 9 L10 6" stroke="#202020" stroke-dasharray="1 1"/></svg>
<svg style="left:41px;top:412.5px" width="6" height="6"><path d="M5.5 0.5 V5.5 H0.5 Z" fill="#6A6A70"/></svg>
<svg style="left:6px;top:421px" width="18" height="18" viewBox="0 0 18 18"><rect x="1" y="1" width="4" height="4" fill="#6A80E8" stroke="#101010" stroke-width="0.8"/><rect x="6" y="5" width="4" height="4" fill="#6A80E8" stroke="#101010" stroke-width="0.8"/><rect x="10" y="3" width="4" height="4" fill="#6A80E8" stroke="#101010" stroke-width="0.8"/><rect x="1" y="9.5" width="4.5" height="4.5" fill="#fff" stroke="#101010" stroke-width="0.8"/><rect x="9" y="11" width="4" height="4" fill="#6A80E8" stroke="#101010" stroke-width="0.8"/></svg>
<svg style="left:28px;top:421px" width="18" height="18" viewBox="0 0 18 18"><rect x="1" y="1" width="4" height="11" fill="#fff" stroke="#101010"/><path d="M5 4 H9 V6" stroke="#101010" fill="none"/><path d="M7 14 L14 7 L16 9 L9 16Z" fill="#6A80E8" stroke="#202030" stroke-width="0.8"/></svg>
<svg style="left:6px;top:443px" width="18" height="18" viewBox="0 0 18 18"><path d="M1 5 L8 1 L15 4 V11 L8 16 L1 12Z" fill="#5A70E0" stroke="#202030"/><path d="M1 5 L8 1 L15 4 L8 7Z" fill="#B0BCF4"/><path d="M5 9 L10 8 V15 L5 14Z" fill="#fff" stroke="#202020" stroke-width="0.6"/></svg>
<svg style="left:28px;top:443px" width="18" height="18" viewBox="0 0 18 18"><path d="M1 14 L4 11 H15 L12 14 Z" fill="#6A80E8" stroke="#202030" stroke-width="0.8"/><path d="M4 11 V3 M8 11 V2 M12 11 V3" stroke="#fff" stroke-width="1.4"/><path d="M2.5 4 L4 1.5 L5.5 4 M6.5 3.5 L8 0.5 L9.5 3.5 M10.5 4 L12 1.5 L13.5 4" fill="#fff" stroke="#fff"/><path d="M4 11 H14" stroke="#101010" stroke-dasharray="2 1"/></svg>
<svg style="left:19px;top:456.5px" width="6" height="6"><path d="M5.5 0.5 V5.5 H0.5 Z" fill="#6A6A70"/></svg>
<svg style="left:41px;top:456.5px" width="6" height="6"><path d="M5.5 0.5 V5.5 H0.5 Z" fill="#6A6A70"/></svg>
<svg style="left:6px;top:465px" width="18" height="18" viewBox="0 0 18 18"><g fill="#6A80E8" stroke="#101010" stroke-width="0.8"><rect x="1" y="1" width="3.5" height="3.5"/><rect x="6.5" y="1" width="3.5" height="3.5"/><rect x="12" y="1" width="3.5" height="3.5"/><rect x="1" y="6.5" width="3.5" height="3.5"/><rect x="6.5" y="6.5" width="3.5" height="3.5"/><rect x="12" y="6.5" width="3.5" height="3.5"/><rect x="1" y="12" width="3.5" height="3.5" fill="#fff"/><rect x="6.5" y="12" width="3.5" height="3.5"/><rect x="12" y="12" width="3.5" height="3.5"/></g></svg>
<svg style="left:28px;top:465px" width="18" height="18" viewBox="0 0 18 18"><rect x="4" y="2" width="7" height="4" fill="#fff" stroke="#101010"/><rect x="4" y="7" width="7" height="3" fill="#fff" stroke="#707070"/><rect x="4" y="11" width="7" height="4" fill="#fff" stroke="#101010"/><path d="M7.5 0 V16" stroke="#E02020" stroke-width="1.6"/></svg>
<svg style="left:19px;top:478.5px" width="6" height="6"><path d="M5.5 0.5 V5.5 H0.5 Z" fill="#6A6A70"/></svg>
<svg style="left:41px;top:478.5px" width="6" height="6"><path d="M5.5 0.5 V5.5 H0.5 Z" fill="#6A6A70"/></svg>
<svg style="left:6px;top:487px" width="18" height="18" viewBox="0 0 18 18"><path d="M1 4 L5 1 V13 L1 16Z" fill="#F0F0F0" stroke="#303030" stroke-width="0.8"/><path d="M5 4 L8 1 L9 2 V13 L5 16Z" fill="#F8F8F8" stroke="#303030" stroke-width="0.8"/><path d="M9 4 L13 1 L15 2 L10 16 L7 15Z" fill="#6A80E8" stroke="#303040" stroke-width="0.8"/></svg>
<svg style="left:28px;top:487px" width="18" height="18" viewBox="0 0 18 18"><path d="M1.5 9 L5 14.5 L15 3" fill="none" stroke="#101010" stroke-width="2.2"/></svg>
<svg style="left:19px;top:500.5px" width="6" height="6"><path d="M5.5 0.5 V5.5 H0.5 Z" fill="#6A6A70"/></svg>
<svg style="left:41px;top:500.5px" width="6" height="6"><path d="M5.5 0.5 V5.5 H0.5 Z" fill="#6A6A70"/></svg>
<svg style="left:6px;top:509px" width="18" height="18" viewBox="0 0 18 18"><path d="M1 5 L5 2 L10 3 L10 10 L6 12 L1 10Z" fill="#C8C8C8" stroke="#505050" stroke-width="0.8"/><path d="M1 5 L6 6 L10 3 M6 6 V12" stroke="#808080" fill="none" stroke-width="0.7"/><path d="M11 2 L16 12 Q12 15 7 12 Z" fill="#B8B8B8" stroke="#606060" stroke-width="0.8"/></svg>
<svg style="left:28px;top:509px" width="18" height="18" viewBox="0 0 18 18"><path d="M1 11 L8 3 L15 11 L8 15 Z" fill="#F0B030" stroke="#906010" stroke-width="0.8"/><path d="M8 3 L8 15 M1 11 L15 11" stroke="#C08010" stroke-width="0.5"/><path d="M5 3 L9 0.5 H15 V3 L10 4Z" fill="#B0B0B0" stroke="#303030" stroke-width="0.7"/><path d="M12 0 V4" stroke="#101010" stroke-width="1.5"/></svg>
<svg style="left:19px;top:522.5px" width="6" height="6"><path d="M5.5 0.5 V5.5 H0.5 Z" fill="#6A6A70"/></svg>
<svg style="left:41px;top:522.5px" width="6" height="6"><path d="M5.5 0.5 V5.5 H0.5 Z" fill="#6A6A70"/></svg>
<div class="a" style="left:53px;top:122px;width:273px;height:209px;background:#A4A9AF;overflow:hidden"><svg style="left:0;top:0" width="273" height="209"><line x1="1.8" y1="0" x2="1.8" y2="209" stroke="#7C8187" stroke-width="1"/><line x1="8.5" y1="0" x2="8.5" y2="209" stroke="#9A9FA5" stroke-width="1"/><line x1="15.3" y1="0" x2="15.3" y2="209" stroke="#9A9FA5" stroke-width="1"/><line x1="22.0" y1="0" x2="22.0" y2="209" stroke="#9A9FA5" stroke-width="1"/><line x1="28.8" y1="0" x2="28.8" y2="209" stroke="#9A9FA5" stroke-width="1"/><line x1="35.5" y1="0" x2="35.5" y2="209" stroke="#7C8187" stroke-width="1"/><line x1="42.2" y1="0" x2="42.2" y2="209" stroke="#9A9FA5" stroke-width="1"/><line x1="49.0" y1="0" x2="49.0" y2="209" stroke="#9A9FA5" stroke-width="1"/><line x1="55.7" y1="0" x2="55.7" y2="209" stroke="#9A9FA5" stroke-width="1"/><line x1="62.5" y1="0" x2="62.5" y2="209" stroke="#9A9FA5" stroke-width="1"/><line x1="69.2" y1="0" x2="69.2" y2="209" stroke="#7C8187" stroke-width="1"/><line x1="75.9" y1="0" x2="75.9" y2="209" stroke="#9A9FA5" stroke-width="1"/><line x1="82.7" y1="0" x2="82.7" y2="209" stroke="#9A9FA5" stroke-width="1"/><line x1="89.4" y1="0" x2="89.4" y2="209" stroke="#9A9FA5" stroke-width="1"/><line x1="96.2" y1="0" x2="96.2" y2="209" stroke="#9A9FA5" stroke-width="1"/><line x1="102.9" y1="0" x2="102.9" y2="209" stroke="#7C8187" stroke-width="1"/><line x1="109.6" y1="0" x2="109.6" y2="209" stroke="#9A9FA5" stroke-width="1"/><line x1="116.4" y1="0" x2="116.4" y2="209" stroke="#9A9FA5" stroke-width="1"/><line x1="123.1" y1="0" x2="123.1" y2="209" stroke="#9A9FA5" stroke-width="1"/><line x1="129.9" y1="0" x2="129.9" y2="209" stroke="#9A9FA5" stroke-width="1"/><line x1="136.6" y1="0" x2="136.6" y2="209" stroke="#7C8187" stroke-width="1"/><line x1="143.3" y1="0" x2="143.3" y2="209" stroke="#9A9FA5" stroke-width="1"/><line x1="150.1" y1="0" x2="150.1" y2="209" stroke="#9A9FA5" stroke-width="1"/><line x1="156.8" y1="0" x2="156.8" y2="209" stroke="#9A9FA5" stroke-width="1"/><line x1="163.6" y1="0" x2="163.6" y2="209" stroke="#9A9FA5" stroke-width="1"/><line x1="170.3" y1="0" x2="170.3" y2="209" stroke="#7C8187" stroke-width="1"/><line x1="177.0" y1="0" x2="177.0" y2="209" stroke="#9A9FA5" stroke-width="1"/><line x1="183.8" y1="0" x2="183.8" y2="209" stroke="#9A9FA5" stroke-width="1"/><line x1="190.5" y1="0" x2="190.5" y2="209" stroke="#9A9FA5" stroke-width="1"/><line x1="197.3" y1="0" x2="197.3" y2="209" stroke="#9A9FA5" stroke-width="1"/><line x1="204.0" y1="0" x2="204.0" y2="209" stroke="#7C8187" stroke-width="1"/><line x1="210.7" y1="0" x2="210.7" y2="209" stroke="#9A9FA5" stroke-width="1"/><line x1="217.5" y1="0" x2="217.5" y2="209" stroke="#9A9FA5" stroke-width="1"/><line x1="224.2" y1="0" x2="224.2" y2="209" stroke="#9A9FA5" stroke-width="1"/><line x1="231.0" y1="0" x2="231.0" y2="209" stroke="#9A9FA5" stroke-width="1"/><line x1="237.7" y1="0" x2="237.7" y2="209" stroke="#7C8187" stroke-width="1"/><line x1="244.4" y1="0" x2="244.4" y2="209" stroke="#9A9FA5" stroke-width="1"/><line x1="251.2" y1="0" x2="251.2" y2="209" stroke="#9A9FA5" stroke-width="1"/><line x1="257.9" y1="0" x2="257.9" y2="209" stroke="#9A9FA5" stroke-width="1"/><line x1="264.7" y1="0" x2="264.7" y2="209" stroke="#9A9FA5" stroke-width="1"/><line x1="271.4" y1="0" x2="271.4" y2="209" stroke="#7C8187" stroke-width="1"/><line x1="0" y1="3.7" x2="273" y2="3.7" stroke="#7C8187" stroke-width="1"/><line x1="0" y1="10.4" x2="273" y2="10.4" stroke="#9A9FA5" stroke-width="1"/><line x1="0" y1="17.2" x2="273" y2="17.2" stroke="#9A9FA5" stroke-width="1"/><line x1="0" y1="23.9" x2="273" y2="23.9" stroke="#9A9FA5" stroke-width="1"/><line x1="0" y1="30.7" x2="273" y2="30.7" stroke="#9A9FA5" stroke-width="1"/><line x1="0" y1="37.4" x2="273" y2="37.4" stroke="#7C8187" stroke-width="1"/><line x1="0" y1="44.1" x2="273" y2="44.1" stroke="#9A9FA5" stroke-width="1"/><line x1="0" y1="50.9" x2="273" y2="50.9" stroke="#9A9FA5" stroke-width="1"/><line x1="0" y1="57.6" x2="273" y2="57.6" stroke="#9A9FA5" stroke-width="1"/><line x1="0" y1="64.4" x2="273" y2="64.4" stroke="#9A9FA5" stroke-width="1"/><line x1="0" y1="71.1" x2="273" y2="71.1" stroke="#7C8187" stroke-width="1"/><line x1="0" y1="77.8" x2="273" y2="77.8" stroke="#9A9FA5" stroke-width="1"/><line x1="0" y1="84.6" x2="273" y2="84.6" stroke="#9A9FA5" stroke-width="1"/><line x1="0" y1="91.3" x2="273" y2="91.3" stroke="#9A9FA5" stroke-width="1"/><line x1="0" y1="98.1" x2="273" y2="98.1" stroke="#9A9FA5" stroke-width="1"/><line x1="0" y1="104.8" x2="273" y2="104.8" stroke="#7C8187" stroke-width="1"/><line x1="0" y1="111.5" x2="273" y2="111.5" stroke="#9A9FA5" stroke-width="1"/><line x1="0" y1="118.3" x2="273" y2="118.3" stroke="#9A9FA5" stroke-width="1"/><line x1="0" y1="125.0" x2="273" y2="125.0" stroke="#9A9FA5" stroke-width="1"/><line x1="0" y1="131.8" x2="273" y2="131.8" stroke="#9A9FA5" stroke-width="1"/><line x1="0" y1="138.5" x2="273" y2="138.5" stroke="#7C8187" stroke-width="1"/><line x1="0" y1="145.2" x2="273" y2="145.2" stroke="#9A9FA5" stroke-width="1"/><line x1="0" y1="152.0" x2="273" y2="152.0" stroke="#9A9FA5" stroke-width="1"/><line x1="0" y1="158.7" x2="273" y2="158.7" stroke="#9A9FA5" stroke-width="1"/><line x1="0" y1="165.5" x2="273" y2="165.5" stroke="#9A9FA5" stroke-width="1"/><line x1="0" y1="172.2" x2="273" y2="172.2" stroke="#7C8187" stroke-width="1"/><line x1="0" y1="178.9" x2="273" y2="178.9" stroke="#9A9FA5" stroke-width="1"/><line x1="0" y1="185.7" x2="273" y2="185.7" stroke="#9A9FA5" stroke-width="1"/><line x1="0" y1="192.4" x2="273" y2="192.4" stroke="#9A9FA5" stroke-width="1"/><line x1="0" y1="199.2" x2="273" y2="199.2" stroke="#9A9FA5" stroke-width="1"/><line x1="0" y1="205.9" x2="273" y2="205.9" stroke="#7C8187" stroke-width="1"/><line x1="136.6" y1="104.8" x2="136.6" y2="0" stroke="#4A9C3C" stroke-width="2"/><line x1="136.6" y1="104.8" x2="273" y2="104.8" stroke="#B0443C" stroke-width="2"/><path d="M29.5 156 V180.5 H53" stroke="#4A4E54" fill="none" stroke-width="1"/></svg><div class="t" style="left:31px;top:148px;color:#3A3E44;font-size:10px">y</div><div class="t" style="left:55px;top:171px;color:#3A3E44;font-size:10px">x</div><div class="a" style="left:0;top:0;width:38px;height:13px;background:#D5D7DB;border-bottom-right-radius:2px"></div><div class="t" style="left:0px;top:0px;width:0"></div><div class="a" style="left:30px;top:2px;width:1px;height:10px;background:#303030"></div><svg style="left:32px;top:5px" width="5" height="3"><path d="M0 0 H5 L2.5 3Z" fill="#202020"/></svg></div>
<div class="t" id="f18" style="left:60px;top:122px;font-size:10.5px;transform:scaleX(1.0037);transform-origin:0 0;">Top</div>
<div class="a" style="left:53px;top:333px;width:273px;height:208px;background:#A4A9AF;overflow:hidden"><svg style="left:0;top:0" width="273" height="208"><line x1="1.8" y1="0" x2="1.8" y2="208" stroke="#7C8187" stroke-width="1"/><line x1="8.5" y1="0" x2="8.5" y2="208" stroke="#9A9FA5" stroke-width="1"/><line x1="15.3" y1="0" x2="15.3" y2="208" stroke="#9A9FA5" stroke-width="1"/><line x1="22.0" y1="0" x2="22.0" y2="208" stroke="#9A9FA5" stroke-width="1"/><line x1="28.8" y1="0" x2="28.8" y2="208" stroke="#9A9FA5" stroke-width="1"/><line x1="35.5" y1="0" x2="35.5" y2="208" stroke="#7C8187" stroke-width="1"/><line x1="42.2" y1="0" x2="42.2" y2="208" stroke="#9A9FA5" stroke-width="1"/><line x1="49.0" y1="0" x2="49.0" y2="208" stroke="#9A9FA5" stroke-width="1"/><line x1="55.7" y1="0" x2="55.7" y2="208" stroke="#9A9FA5" stroke-width="1"/><line x1="62.5" y1="0" x2="62.5" y2="208" stroke="#9A9FA5" stroke-width="1"/><line x1="69.2" y1="0" x2="69.2" y2="208" stroke="#7C8187" stroke-width="1"/><line x1="75.9" y1="0" x2="75.9" y2="208" stroke="#9A9FA5" stroke-width="1"/><line x1="82.7" y1="0" x2="82.7" y2="208" stroke="#9A9FA5" stroke-width="1"/><line x1="89.4" y1="0" x2="89.4" y2="208" stroke="#9A9FA5" stroke-width="1"/><line x1="96.2" y1="0" x2="96.2" y2="208" stroke="#9A9FA5" stroke-width="1"/><line x1="102.9" y1="0" x2="102.9" y2="208" stroke="#7C8187" stroke-width="1"/><line x1="109.6" y1="0" x2="109.6" y2="208" stroke="#9A9FA5" stroke-width="1"/><line x1="116.4" y1="0" x2="116.4" y2="208" stroke="#9A9FA5" stroke-width="1"/><line x1="123.1" y1="0" x2="123.1" y2="208" stroke="#9A9FA5" stroke-width="1"/><line x1="129.9" y1="0" x2="129.9" y2="208" stroke="#9A9FA5" stroke-width="1"/><line x1="136.6" y1="0" x2="136.6" y2="208" stroke="#7C8187" stroke-width="1"/><line x1="143.3" y1="0" x2="143.3" y2="208" stroke="#9A9FA5" stroke-width="1"/><line x1="150.1" y1="0" x2="150.1" y2="208" stroke="#9A9FA5" stroke-width="1"/><line x1="156.8" y1="0" x2="156.8" y2="208" stroke="#9A9FA5" stroke-width="1"/><line x1="163.6" y1="0" x2="163.6" y2="208" stroke="#9A9FA5" stroke-width="1"/><line x1="170.3" y1="0" x2="170.3" y2="208" stroke="#7C8187" stroke-width="1"/><line x1="177.0" y1="0" x2="177.0" y2="208" stroke="#9A9FA5" stroke-width="1"/><line x1="183.8" y1="0" x2="183.8" y2="208" stroke="#9A9FA5" stroke-width="1"/><line x1="190.5" y1="0" x2="190.5" y2="208" stroke="#9A9FA5" stroke-width="1"/><line x1="197.3" y1="0" x2="197.3" y2="208" stroke="#9A9FA5" stroke-width="1"/><line x1="204.0" y1="0" x2="204.0" y2="208" stroke="#7C8187" stroke-width="1"/><line x1="210.7" y1="0" x2="210.7" y2="208" stroke="#9A9FA5" stroke-width="1"/><line x1="217.5" y1="0" x2="217.5" y2="208" stroke="#9A9FA5" stroke-width="1"/><line x1="224.2" y1="0" x2="224.2" y2="208" stroke="#9A9FA5" stroke-width="1"/><line x1="231.0" y1="0" x2="231.0" y2="208" stroke="#9A9FA5" stroke-width="1"/><line x1="237.7" y1="0" x2="237.7" y2="208" stroke="#7C8187" stroke-width="1"/><line x1="244.4" y1="0" x2="244.4" y2="208" stroke="#9A9FA5" stroke-width="1"/><line x1="251.2" y1="0" x2="251.2" y2="208" stroke="#9A9FA5" stroke-width="1"/><line x1="257.9" y1="0" x2="257.9" y2="208" stroke="#9A9FA5" stroke-width="1"/><line x1="264.7" y1="0" x2="264.7" y2="208" stroke="#9A9FA5" stroke-width="1"/><line x1="271.4" y1="0" x2="271.4" y2="208" stroke="#7C8187" stroke-width="1"/><line x1="0" y1="3.3" x2="273" y2="3.3" stroke="#7C8187" stroke-width="1"/><line x1="0" y1="10.0" x2="273" y2="10.0" stroke="#9A9FA5" stroke-width="1"/><line x1="0" y1="16.8" x2="273" y2="16.8" stroke="#9A9FA5" stroke-width="1"/><line x1="0" y1="23.5" x2="273" y2="23.5" stroke="#9A9FA5" stroke-width="1"/><line x1="0" y1="30.3" x2="273" y2="30.3" stroke="#9A9FA5" stroke-width="1"/><line x1="0" y1="37.0" x2="273" y2="37.0" stroke="#7C8187" stroke-width="1"/><line x1="0" y1="43.7" x2="273" y2="43.7" stroke="#9A9FA5" stroke-width="1"/><line x1="0" y1="50.5" x2="273" y2="50.5" stroke="#9A9FA5" stroke-width="1"/><line x1="0" y1="57.2" x2="273" y2="57.2" stroke="#9A9FA5" stroke-width="1"/><line x1="0" y1="64.0" x2="273" y2="64.0" stroke="#9A9FA5" stroke-width="1"/><line x1="0" y1="70.7" x2="273" y2="70.7" stroke="#7C8187" stroke-width="1"/><line x1="0" y1="77.4" x2="273" y2="77.4" stroke="#9A9FA5" stroke-width="1"/><line x1="0" y1="84.2" x2="273" y2="84.2" stroke="#9A9FA5" stroke-width="1"/><line x1="0" y1="90.9" x2="273" y2="90.9" stroke="#9A9FA5" stroke-width="1"/><line x1="0" y1="97.7" x2="273" y2="97.7" stroke="#9A9FA5" stroke-width="1"/><line x1="0" y1="104.4" x2="273" y2="104.4" stroke="#7C8187" stroke-width="1"/><line x1="0" y1="111.1" x2="273" y2="111.1" stroke="#9A9FA5" stroke-width="1"/><line x1="0" y1="117.9" x2="273" y2="117.9" stroke="#9A9FA5" stroke-width="1"/><line x1="0" y1="124.6" x2="273" y2="124.6" stroke="#9A9FA5" stroke-width="1"/><line x1="0" y1="131.4" x2="273" y2="131.4" stroke="#9A9FA5" stroke-width="1"/><line x1="0" y1="138.1" x2="273" y2="138.1" stroke="#7C8187" stroke-width="1"/><line x1="0" y1="144.8" x2="273" y2="144.8" stroke="#9A9FA5" stroke-width="1"/><line x1="0" y1="151.6" x2="273" y2="151.6" stroke="#9A9FA5" stroke-width="1"/><line x1="0" y1="158.3" x2="273" y2="158.3" stroke="#9A9FA5" stroke-width="1"/><line x1="0" y1="165.1" x2="273" y2="165.1" stroke="#9A9FA5" stroke-width="1"/><line x1="0" y1="171.8" x2="273" y2="171.8" stroke="#7C8187" stroke-width="1"/><line x1="0" y1="178.5" x2="273" y2="178.5" stroke="#9A9FA5" stroke-width="1"/><line x1="0" y1="185.3" x2="273" y2="185.3" stroke="#9A9FA5" stroke-width="1"/><line x1="0" y1="192.0" x2="273" y2="192.0" stroke="#9A9FA5" stroke-width="1"/><line x1="0" y1="198.8" x2="273" y2="198.8" stroke="#9A9FA5" stroke-width="1"/><line x1="0" y1="205.5" x2="273" y2="205.5" stroke="#7C8187" stroke-width="1"/><line x1="136.6" y1="104.4" x2="136.6" y2="0" stroke="#4A9C3C" stroke-width="2"/><line x1="136.6" y1="104.4" x2="273" y2="104.4" stroke="#B0443C" stroke-width="2"/><path d="M29.5 156 V180.5 H53" stroke="#4A4E54" fill="none" stroke-width="1"/></svg><div class="t" style="left:31px;top:148px;color:#3A3E44;font-size:10px">z</div><div class="t" style="left:55px;top:171px;color:#3A3E44;font-size:10px">x</div><div class="a" style="left:0;top:0;width:44px;height:13px;background:#D5D7DB;border-bottom-right-radius:2px"></div><div class="t" style="left:0px;top:0px;width:0"></div><div class="a" style="left:36px;top:2px;width:1px;height:10px;background:#303030"></div><svg style="left:38px;top:5px" width="5" height="3"><path d="M0 0 H5 L2.5 3Z" fill="#202020"/></svg></div>
<div class="t" id="f19" style="left:60px;top:333px;font-size:10.5px;transform:scaleX(0.9382);transform-origin:0 0;">Front</div>
<div class="a" style="left:328px;top:333px;width:274px;height:208px;background:#A4A9AF;overflow:hidden"><svg style="left:0;top:0" width="274" height="208"><line x1="2.8" y1="0" x2="2.8" y2="208" stroke="#7C8187" stroke-width="1"/><line x1="9.5" y1="0" x2="9.5" y2="208" stroke="#9A9FA5" stroke-width="1"/><line x1="16.3" y1="0" x2="16.3" y2="208" stroke="#9A9FA5" stroke-width="1"/><line x1="23.0" y1="0" x2="23.0" y2="208" stroke="#9A9FA5" stroke-width="1"/><line x1="29.8" y1="0" x2="29.8" y2="208" stroke="#9A9FA5" stroke-width="1"/><line x1="36.5" y1="0" x2="36.5" y2="208" stroke="#7C8187" stroke-width="1"/><line x1="43.2" y1="0" x2="43.2" y2="208" stroke="#9A9FA5" stroke-width="1"/><line x1="50.0" y1="0" x2="50.0" y2="208" stroke="#9A9FA5" stroke-width="1"/><line x1="56.7" y1="0" x2="56.7" y2="208" stroke="#9A9FA5" stroke-width="1"/><line x1="63.5" y1="0" x2="63.5" y2="208" stroke="#9A9FA5" stroke-width="1"/><line x1="70.2" y1="0" x2="70.2" y2="208" stroke="#7C8187" stroke-width="1"/><line x1="76.9" y1="0" x2="76.9" y2="208" stroke="#9A9FA5" stroke-width="1"/><line x1="83.7" y1="0" x2="83.7" y2="208" stroke="#9A9FA5" stroke-width="1"/><line x1="90.4" y1="0" x2="90.4" y2="208" stroke="#9A9FA5" stroke-width="1"/><line x1="97.2" y1="0" x2="97.2" y2="208" stroke="#9A9FA5" stroke-width="1"/><line x1="103.9" y1="0" x2="103.9" y2="208" stroke="#7C8187" stroke-width="1"/><line x1="110.6" y1="0" x2="110.6" y2="208" stroke="#9A9FA5" stroke-width="1"/><line x1="117.4" y1="0" x2="117.4" y2="208" stroke="#9A9FA5" stroke-width="1"/><line x1="124.1" y1="0" x2="124.1" y2="208" stroke="#9A9FA5" stroke-width="1"/><line x1="130.9" y1="0" x2="130.9" y2="208" stroke="#9A9FA5" stroke-width="1"/><line x1="137.6" y1="0" x2="137.6" y2="208" stroke="#7C8187" stroke-width="1"/><line x1="144.3" y1="0" x2="144.3" y2="208" stroke="#9A9FA5" stroke-width="1"/><line x1="151.1" y1="0" x2="151.1" y2="208" stroke="#9A9FA5" stroke-width="1"/><line x1="157.8" y1="0" x2="157.8" y2="208" stroke="#9A9FA5" stroke-width="1"/><line x1="164.6" y1="0" x2="164.6" y2="208" stroke="#9A9FA5" stroke-width="1"/><line x1="171.3" y1="0" x2="171.3" y2="208" stroke="#7C8187" stroke-width="1"/><line x1="178.0" y1="0" x2="178.0" y2="208" stroke="#9A9FA5" stroke-width="1"/><line x1="184.8" y1="0" x2="184.8" y2="208" stroke="#9A9FA5" stroke-width="1"/><line x1="191.5" y1="0" x2="191.5" y2="208" stroke="#9A9FA5" stroke-width="1"/><line x1="198.3" y1="0" x2="198.3" y2="208" stroke="#9A9FA5" stroke-width="1"/><line x1="205.0" y1="0" x2="205.0" y2="208" stroke="#7C8187" stroke-width="1"/><line x1="211.7" y1="0" x2="211.7" y2="208" stroke="#9A9FA5" stroke-width="1"/><line x1="218.5" y1="0" x2="218.5" y2="208" stroke="#9A9FA5" stroke-width="1"/><line x1="225.2" y1="0" x2="225.2" y2="208" stroke="#9A9FA5" stroke-width="1"/><line x1="232.0" y1="0" x2="232.0" y2="208" stroke="#9A9FA5" stroke-width="1"/><line x1="238.7" y1="0" x2="238.7" y2="208" stroke="#7C8187" stroke-width="1"/><line x1="245.4" y1="0" x2="245.4" y2="208" stroke="#9A9FA5" stroke-width="1"/><line x1="252.2" y1="0" x2="252.2" y2="208" stroke="#9A9FA5" stroke-width="1"/><line x1="258.9" y1="0" x2="258.9" y2="208" stroke="#9A9FA5" stroke-width="1"/><line x1="265.7" y1="0" x2="265.7" y2="208" stroke="#9A9FA5" stroke-width="1"/><line x1="272.4" y1="0" x2="272.4" y2="208" stroke="#7C8187" stroke-width="1"/><line x1="0" y1="3.2" x2="274" y2="3.2" stroke="#7C8187" stroke-width="1"/><line x1="0" y1="9.9" x2="274" y2="9.9" stroke="#9A9FA5" stroke-width="1"/><line x1="0" y1="16.7" x2="274" y2="16.7" stroke="#9A9FA5" stroke-width="1"/><line x1="0" y1="23.4" x2="274" y2="23.4" stroke="#9A9FA5" stroke-width="1"/><line x1="0" y1="30.2" x2="274" y2="30.2" stroke="#9A9FA5" stroke-width="1"/><line x1="0" y1="36.9" x2="274" y2="36.9" stroke="#7C8187" stroke-width="1"/><line x1="0" y1="43.6" x2="274" y2="43.6" stroke="#9A9FA5" stroke-width="1"/><line x1="0" y1="50.4" x2="274" y2="50.4" stroke="#9A9FA5" stroke-width="1"/><line x1="0" y1="57.1" x2="274" y2="57.1" stroke="#9A9FA5" stroke-width="1"/><line x1="0" y1="63.9" x2="274" y2="63.9" stroke="#9A9FA5" stroke-width="1"/><line x1="0" y1="70.6" x2="274" y2="70.6" stroke="#7C8187" stroke-width="1"/><line x1="0" y1="77.3" x2="274" y2="77.3" stroke="#9A9FA5" stroke-width="1"/><line x1="0" y1="84.1" x2="274" y2="84.1" stroke="#9A9FA5" stroke-width="1"/><line x1="0" y1="90.8" x2="274" y2="90.8" stroke="#9A9FA5" stroke-width="1"/><line x1="0" y1="97.6" x2="274" y2="97.6" stroke="#9A9FA5" stroke-width="1"/><line x1="0" y1="104.3" x2="274" y2="104.3" stroke="#7C8187" stroke-width="1"/><line x1="0" y1="111.0" x2="274" y2="111.0" stroke="#9A9FA5" stroke-width="1"/><line x1="0" y1="117.8" x2="274" y2="117.8" stroke="#9A9FA5" stroke-width="1"/><line x1="0" y1="124.5" x2="274" y2="124.5" stroke="#9A9FA5" stroke-width="1"/><line x1="0" y1="131.3" x2="274" y2="131.3" stroke="#9A9FA5" stroke-width="1"/><line x1="0" y1="138.0" x2="274" y2="138.0" stroke="#7C8187" stroke-width="1"/><line x1="0" y1="144.7" x2="274" y2="144.7" stroke="#9A9FA5" stroke-width="1"/><line x1="0" y1="151.5" x2="274" y2="151.5" stroke="#9A9FA5" stroke-width="1"/><line x1="0" y1="158.2" x2="274" y2="158.2" stroke="#9A9FA5" stroke-width="1"/><line x1="0" y1="165.0" x2="274" y2="165.0" stroke="#9A9FA5" stroke-width="1"/><line x1="0" y1="171.7" x2="274" y2="171.7" stroke="#7C8187" stroke-width="1"/><line x1="0" y1="178.4" x2="274" y2="178.4" stroke="#9A9FA5" stroke-width="1"/><line x1="0" y1="185.2" x2="274" y2="185.2" stroke="#9A9FA5" stroke-width="1"/><line x1="0" y1="191.9" x2="274" y2="191.9" stroke="#9A9FA5" stroke-width="1"/><line x1="0" y1="198.7" x2="274" y2="198.7" stroke="#9A9FA5" stroke-width="1"/><line x1="0" y1="205.4" x2="274" y2="205.4" stroke="#7C8187" stroke-width="1"/><line x1="137.6" y1="104.3" x2="137.6" y2="0" stroke="#4A9C3C" stroke-width="2"/><line x1="137.6" y1="104.3" x2="274" y2="104.3" stroke="#B0443C" stroke-width="2"/><path d="M29.5 156 V180.5 H53" stroke="#4A4E54" fill="none" stroke-width="1"/></svg><div class="t" style="left:31px;top:148px;color:#3A3E44;font-size:10px">z</div><div class="t" style="left:55px;top:171px;color:#3A3E44;font-size:10px">y</div><div class="a" style="left:0;top:0;width:44px;height:13px;background:#D5D7DB;border-bottom-right-radius:2px"></div><div class="t" style="left:0px;top:0px;width:0"></div><div class="a" style="left:36px;top:2px;width:1px;height:10px;background:#303030"></div><svg style="left:38px;top:5px" width="5" height="3"><path d="M0 0 H5 L2.5 3Z" fill="#202020"/></svg></div>
<div class="t" id="f20" style="left:335px;top:333px;font-size:10.5px;transform:scaleX(0.9586);transform-origin:0 0;">Right</div>
<div class="a" style="left:328px;top:122px;width:274px;height:209px;background:#A4A9AF;overflow:hidden"><svg style="left:0;top:0" width="274" height="209"><line x1="-352.1" y1="170.6" x2="75.5" y2="-10.6" stroke="#8A8F95"/><line x1="-352.1" y1="170.6" x2="507.0" y2="794.6" stroke="#8A8F95"/><line x1="-343.4" y1="176.8" x2="83.1" y2="-9.2" stroke="#8A8F95"/><line x1="-327.7" y1="160.2" x2="503.1" y2="716.8" stroke="#8A8F95"/><line x1="-334.5" y1="183.3" x2="91.0" y2="-7.8" stroke="#8A8F95"/><line x1="-304.7" y1="150.5" x2="499.7" y2="650.6" stroke="#8A8F95"/><line x1="-325.2" y1="190.1" x2="98.9" y2="-6.4" stroke="#8A8F95"/><line x1="-283.1" y1="141.3" x2="496.8" y2="593.6" stroke="#8A8F95"/><line x1="-315.6" y1="197.1" x2="107.0" y2="-4.9" stroke="#8A8F95"/><line x1="-262.6" y1="132.7" x2="494.3" y2="543.9" stroke="#8A8F95"/><line x1="-305.6" y1="204.4" x2="115.2" y2="-3.4" stroke="#8A8F95"/><line x1="-243.2" y1="124.5" x2="492.1" y2="500.3" stroke="#8A8F95"/><line x1="-295.1" y1="211.9" x2="123.6" y2="-1.9" stroke="#8A8F95"/><line x1="-224.9" y1="116.7" x2="490.2" y2="461.7" stroke="#8A8F95"/><line x1="-284.3" y1="219.8" x2="132.1" y2="-0.4" stroke="#8A8F95"/><line x1="-207.5" y1="109.3" x2="488.4" y2="427.3" stroke="#8A8F95"/><line x1="-273.0" y1="228.0" x2="140.8" y2="1.2" stroke="#8A8F95"/><line x1="-190.9" y1="102.3" x2="486.8" y2="396.4" stroke="#8A8F95"/><line x1="-261.2" y1="236.6" x2="149.7" y2="2.8" stroke="#8A8F95"/><line x1="-175.2" y1="95.6" x2="485.4" y2="368.6" stroke="#8A8F95"/><line x1="-248.9" y1="245.5" x2="158.7" y2="4.4" stroke="#8A8F95"/><line x1="-160.2" y1="89.3" x2="484.2" y2="343.3" stroke="#8A8F95"/><line x1="-236.0" y1="254.9" x2="167.9" y2="6.1" stroke="#8A8F95"/><line x1="-145.9" y1="83.2" x2="483.0" y2="320.3" stroke="#8A8F95"/><line x1="-222.6" y1="264.6" x2="177.2" y2="7.7" stroke="#8A8F95"/><line x1="-132.2" y1="77.4" x2="481.9" y2="299.3" stroke="#8A8F95"/><line x1="-208.5" y1="274.8" x2="186.7" y2="9.5" stroke="#8A8F95"/><line x1="-119.2" y1="71.9" x2="481.0" y2="279.9" stroke="#8A8F95"/><line x1="-193.8" y1="285.5" x2="196.4" y2="11.2" stroke="#8A8F95"/><line x1="-106.7" y1="66.6" x2="480.1" y2="262.1" stroke="#8A8F95"/><line x1="-178.3" y1="296.8" x2="206.3" y2="13.0" stroke="#8A8F95"/><line x1="-94.7" y1="61.5" x2="479.2" y2="245.7" stroke="#8A8F95"/><line x1="-162.1" y1="308.6" x2="216.4" y2="14.8" stroke="#8A8F95"/><line x1="-83.2" y1="56.7" x2="478.5" y2="230.4" stroke="#8A8F95"/><line x1="-145.0" y1="321.0" x2="226.7" y2="16.7" stroke="#8A8F95"/><line x1="-72.2" y1="52.0" x2="477.7" y2="216.3" stroke="#8A8F95"/><line x1="-127.1" y1="334.0" x2="237.2" y2="18.6" stroke="#8A8F95"/><line x1="-61.7" y1="47.5" x2="477.1" y2="203.1" stroke="#8A8F95"/><line x1="-108.1" y1="347.8" x2="247.9" y2="20.5" stroke="#8A8F95"/><line x1="-51.5" y1="43.2" x2="476.4" y2="190.7" stroke="#8A8F95"/><line x1="-88.1" y1="362.3" x2="258.9" y2="22.5" stroke="#8A8F95"/><line x1="-41.8" y1="39.1" x2="475.9" y2="179.1" stroke="#8A8F95"/><line x1="-66.9" y1="377.7" x2="270.0" y2="24.5" stroke="#8A8F95"/><line x1="-32.4" y1="35.1" x2="475.3" y2="168.3" stroke="#8A8F95"/><line x1="-44.5" y1="394.0" x2="281.4" y2="26.5" stroke="#8A8F95"/><line x1="-23.3" y1="31.3" x2="474.8" y2="158.1" stroke="#8A8F95"/><line x1="-20.7" y1="411.3" x2="293.0" y2="28.6" stroke="#8A8F95"/><line x1="-14.6" y1="27.6" x2="474.3" y2="148.5" stroke="#8A8F95"/><line x1="4.5" y1="429.6" x2="304.9" y2="30.7" stroke="#8A8F95"/><line x1="-6.2" y1="24.0" x2="473.8" y2="139.4" stroke="#8A8F95"/><line x1="31.5" y1="449.2" x2="317.0" y2="32.9" stroke="#8A8F95"/><line x1="1.9" y1="20.6" x2="473.4" y2="130.9" stroke="#8A8F95"/><line x1="60.2" y1="470.1" x2="329.4" y2="35.2" stroke="#8A8F95"/><line x1="9.7" y1="17.3" x2="473.0" y2="122.7" stroke="#8A8F95"/><line x1="90.9" y1="492.4" x2="342.0" y2="37.4" stroke="#8A8F95"/><line x1="17.3" y1="14.1" x2="472.6" y2="115.1" stroke="#8A8F95"/><line x1="123.8" y1="516.3" x2="355.0" y2="39.8" stroke="#8A8F95"/><line x1="24.6" y1="11.0" x2="472.2" y2="107.8" stroke="#8A8F95"/><line x1="159.2" y1="542.0" x2="368.2" y2="42.2" stroke="#8A8F95"/><line x1="31.7" y1="8.0" x2="471.9" y2="100.8" stroke="#8A8F95"/><line x1="197.4" y1="569.7" x2="381.8" y2="44.6" stroke="#8A8F95"/><line x1="38.6" y1="5.1" x2="471.6" y2="94.2" stroke="#8A8F95"/><line x1="238.6" y1="599.6" x2="395.6" y2="47.1" stroke="#8A8F95"/><line x1="45.2" y1="2.2" x2="471.2" y2="87.9" stroke="#8A8F95"/><line x1="283.2" y1="632.1" x2="409.8" y2="49.6" stroke="#8A8F95"/><line x1="51.6" y1="-0.5" x2="470.9" y2="81.9" stroke="#8A8F95"/><line x1="331.8" y1="667.4" x2="424.2" y2="52.2" stroke="#8A8F95"/><line x1="57.9" y1="-3.1" x2="470.6" y2="76.2" stroke="#8A8F95"/><line x1="384.8" y1="705.9" x2="439.1" y2="54.9" stroke="#8A8F95"/><line x1="63.9" y1="-5.7" x2="470.4" y2="70.7" stroke="#8A8F95"/><line x1="443.0" y1="748.1" x2="454.3" y2="57.7" stroke="#8A8F95"/><line x1="69.8" y1="-8.2" x2="470.1" y2="65.5" stroke="#8A8F95"/><line x1="507.0" y1="794.6" x2="469.9" y2="60.5" stroke="#8A8F95"/><line x1="75.5" y1="-10.6" x2="469.9" y2="60.5" stroke="#8A8F95"/><line x1="137.4" y1="105.0" x2="237.2" y2="18.6" stroke="#4A9A3A" stroke-width="1.25"/><line x1="137.4" y1="105.0" x2="477.1" y2="203.1" stroke="#B04038" stroke-width="1.25"/><path d="M29.5 159 V180.2 L48.7 186.3 M29.5 180.2 L39.6 171" stroke="#4A4E54" fill="none"/></svg><div class="t" style="left:32px;top:150px;color:#3A3E44;font-size:10px">z</div><div class="t" style="left:41px;top:160px;color:#3A3E44;font-size:10px">y</div><div class="t" style="left:52px;top:176px;color:#3A3E44;font-size:10px">x</div><div class="a" style="left:0;top:0;width:73px;height:13px;background:#9BB3D3;border-bottom-right-radius:2px"></div><div class="t" style="left:0px;top:0px;width:0"></div><div class="a" style="left:65px;top:2px;width:1px;height:10px;background:#303030"></div><svg style="left:67px;top:5px" width="5" height="3"><path d="M0 0 H5 L2.5 3Z" fill="#202020"/></svg></div>
<div class="t" id="f21" style="left:335px;top:122px;font-size:10.5px;transform:scaleX(0.9479);transform-origin:0 0;">Perspective</div>
<div class="a" style="left:604px;top:118px;width:157px;height:437px;background:#E8E7F0"></div>
<div class="a" style="left:608px;top:124px;width:153px;height:1px;background:#B8BACC"></div>
<div class="a" style="left:608px;top:126px;width:153px;height:1px;background:#B8BACC"></div>
<div class="a" style="left:608px;top:145px;width:153px;height:409px;background:#fff;border-left:1px solid #A4A8BE;border-bottom:1px solid #A4A8BE"></div>
<svg style="left:0;top:0" width="764" height="573"><defs><linearGradient id="ptg" x1="0" y1="0" x2="0" y2="1"><stop offset="0" stop-color="#E8EAF4"/><stop offset="1" stop-color="#D2D6E8"/></linearGradient></defs><line x1="608" y1="145.5" x2="761" y2="145.5" stroke="#A4A8BE"/><path d="M709.5 145.5 L709.5 130.5 Q709.5 128.5 711.5 128.5 L734 128.5 L750 145.5" fill="url(#ptg)" stroke="#A4A8BE" stroke-width="1"/><path d="M676.5 145.5 L676.5 130.5 Q676.5 128.5 678.5 128.5 L701 128.5 L709 145.5" fill="url(#ptg)" stroke="#A4A8BE" stroke-width="1"/><path d="M642.5 145.5 L642.5 130.5 Q642.5 128.5 644.5 128.5 L667 128.5 L674 145.5" fill="url(#ptg)" stroke="#A4A8BE" stroke-width="1"/><path d="M608.5 145.5 L608.5 130.5 Q608.5 128.5 610.5 128.5 L632 128.5 L649 145.5" fill="#FFFFFF" stroke="#A4A8BE" stroke-width="1"/><rect x="609" y="145" width="39" height="2" fill="#fff"/></svg>
<div class="a" style="left:612px;top:131px;width:11.5px;height:11.5px;border-radius:50%;background:conic-gradient(#F01818,#F0C010,#30C030,#10C0E0,#2030D0,#B010B0,#F01818)"><div class="a" style="left:3px;top:3px;width:5.5px;height:5.5px;border-radius:50%;background:#fff"></div></div>
<div class="t h" style="left:627px;top:130px;font-size:10px">속</div>
<svg style="left:645px;top:131px" width="12" height="12" viewBox="0 0 12 12"><path d="M0.5 0.5 L11.5 2 L10.5 8 L5 11.5 L0.5 7 Z" fill="#202878"/><path d="M1.5 1.2 L10.8 2.6 L10 6 L5 8.2 L1.5 5.5 Z" fill="#F4481A"/><path d="M1.5 5.5 L5 8.2 L10 6 L10 7.2 L5 9.8 L1.5 6.8Z" fill="#F8F8F8"/><path d="M1.5 6.8 L5 9.8 L10 7.2 L9.8 8 L5 10.8 L1.5 7.8Z" fill="#E02020"/></svg>
<div class="t h" style="left:660px;top:130px;font-size:10px">레</div>
<svg style="left:679px;top:131px" width="13" height="12" viewBox="0 0 13 12"><rect x="0.5" y="0.5" width="12" height="8.5" fill="url(#mong)" stroke="#202020"/><rect x="4" y="9" width="5" height="1.5" fill="#202020"/><rect x="2" y="10.5" width="9" height="1.5" fill="#202020"/><defs><linearGradient id="mong" x1="0" y1="0" x2="1" y2="1"><stop offset="0" stop-color="#E8E8E8"/><stop offset="1" stop-color="#909090"/></linearGradient></defs></svg>
<div class="t h" style="left:694px;top:130px;font-size:10px">표</div>
<svg style="left:714px;top:131px" width="12" height="12" viewBox="0 0 12 12"><rect x="0" y="0" width="12" height="12" fill="#D0D4E0"/><rect x="0.5" y="1" width="11" height="1" fill="#2840A0"/><circle cx="6" cy="7.2" r="4.2" fill="#2848C8"/><text x="3.6" y="10.5" font-size="7.5" fill="#fff" font-weight="bold" font-family="Liberation Sans">?</text></svg>
<div class="t h" style="left:728.5px;top:130px;font-size:10px">도</div>
<svg style="left:748px;top:132px" width="12" height="12" viewBox="0 0 12 12"><path d="M5 0.5 H7 L7.4 2.2 L9 1.3 L10.6 2.9 L9.7 4.5 L11.5 5 V7 L9.7 7.5 L10.6 9.1 L9 10.7 L7.4 9.8 L7 11.5 H5 L4.6 9.8 L3 10.7 L1.4 9.1 L2.3 7.5 L0.5 7 V5 L2.3 4.5 L1.4 2.9 L3 1.3 L4.6 2.2Z" fill="#F4F4F8" stroke="#A0A0A8" stroke-width="0.8"/><circle cx="6" cy="6" r="1.8" fill="none" stroke="#A0A0A8" stroke-width="0.8"/></svg>
<svg style="left:0;top:0" width="764" height="573"><rect x="612.5" y="151.5" width="143" height="313" fill="none" stroke="#E2E2EA"/><line x1="612" y1="168.5" x2="756" y2="168.5" stroke="#E2E2EA"/><line x1="612" y1="182.5" x2="756" y2="182.5" stroke="#E2E2EA"/><line x1="683.5" y1="168" x2="683.5" y2="182" stroke="#E2E2EA"/><line x1="612" y1="197.5" x2="756" y2="197.5" stroke="#E2E2EA"/><line x1="683.5" y1="182" x2="683.5" y2="197" stroke="#E2E2EA"/><line x1="612" y1="212.5" x2="756" y2="212.5" stroke="#E2E2EA"/><line x1="683.5" y1="197" x2="683.5" y2="212" stroke="#E2E2EA"/><line x1="612" y1="225.5" x2="756" y2="225.5" stroke="#E2E2EA"/><line x1="683.5" y1="212" x2="683.5" y2="225" stroke="#E2E2EA"/><line x1="612" y1="243.5" x2="756" y2="243.5" stroke="#E2E2EA"/><line x1="612" y1="258.5" x2="756" y2="258.5" stroke="#E2E2EA"/><line x1="683.5" y1="243" x2="683.5" y2="258" stroke="#E2E2EA"/><line x1="612" y1="272.5" x2="756" y2="272.5" stroke="#E2E2EA"/><line x1="683.5" y1="258" x2="683.5" y2="272" stroke="#E2E2EA"/><line x1="612" y1="286.5" x2="756" y2="286.5" stroke="#E2E2EA"/><line x1="683.5" y1="272" x2="683.5" y2="286" stroke="#E2E2EA"/><line x1="612" y1="300.5" x2="756" y2="300.5" stroke="#E2E2EA"/><line x1="683.5" y1="286" x2="683.5" y2="300" stroke="#E2E2EA"/><line x1="612" y1="316.5" x2="756" y2="316.5" stroke="#E2E2EA"/><line x1="683.5" y1="300" x2="683.5" y2="316" stroke="#E2E2EA"/><line x1="612" y1="329.5" x2="756" y2="329.5" stroke="#E2E2EA"/><line x1="683.5" y1="316" x2="683.5" y2="329" stroke="#E2E2EA"/><line x1="612" y1="347.5" x2="756" y2="347.5" stroke="#E2E2EA"/><line x1="612" y1="362.5" x2="756" y2="362.5" stroke="#E2E2EA"/><line x1="683.5" y1="347" x2="683.5" y2="362" stroke="#E2E2EA"/><line x1="612" y1="375.5" x2="756" y2="375.5" stroke="#E2E2EA"/><line x1="683.5" y1="362" x2="683.5" y2="375" stroke="#E2E2EA"/><line x1="612" y1="390.5" x2="756" y2="390.5" stroke="#E2E2EA"/><line x1="683.5" y1="375" x2="683.5" y2="390" stroke="#E2E2EA"/><line x1="612" y1="404.5" x2="756" y2="404.5" stroke="#E2E2EA"/><line x1="683.5" y1="390" x2="683.5" y2="404" stroke="#E2E2EA"/><line x1="612" y1="422.5" x2="756" y2="422.5" stroke="#E2E2EA"/><line x1="612" y1="436.5" x2="756" y2="436.5" stroke="#E2E2EA"/><line x1="683.5" y1="422" x2="683.5" y2="436" stroke="#E2E2EA"/><line x1="612" y1="450.5" x2="756" y2="450.5" stroke="#E2E2EA"/><line x1="683.5" y1="436" x2="683.5" y2="450" stroke="#E2E2EA"/><line x1="612" y1="465.5" x2="756" y2="465.5" stroke="#E2E2EA"/><line x1="683.5" y1="450" x2="683.5" y2="465" stroke="#E2E2EA"/></svg>
<div class="t h" style="left:614px;top:155px;color:#2458E4;font-size:10px">뷰포트</div>
<div class="t h" style="left:624px;top:169px;font-size:10px">제목</div>
<div class="t" style="left:687px;top:169px;font-size:10px">Perspective</div>
<div class="t h" style="left:624px;top:184px;font-size:10px">너비</div>
<div class="t" style="left:687px;top:184px;font-size:10px">341</div>
<div class="t h" style="left:624px;top:198px;font-size:10px">높이</div>
<div class="t" style="left:687px;top:198px;font-size:10px">261</div>
<div class="t h" style="left:624px;top:212px;font-size:10px">투영</div>
<div class="t h" style="left:687px;top:212px;font-size:10px">투시</div>
<div class="a" style="left:742px;top:213px;width:13px;height:13px;background:linear-gradient(#DDE7FA,#BCD0F2)"><svg style="left:3px;top:4px" width="8" height="6"><path d="M1 1 L4 4 L7 1" stroke="#30407A" stroke-width="1.6" fill="none"/></svg></div>
<div class="t h" style="left:614px;top:229px;color:#2458E4;font-size:10px">카메라</div>
<div class="t h" style="left:624px;top:244px;font-size:10px">렌즈 길이</div>
<div class="t" style="left:687px;top:244px;font-size:10px">50,0</div>
<div class="t h" style="left:624px;top:259px;font-size:10px">회전</div>
<div class="t" style="left:687px;top:259px;font-size:10px">0,0</div>
<div class="t h" style="left:624px;top:273px;font-size:10px">X 위치</div>
<div class="t" style="left:687px;top:273px;font-size:10px">43,111</div>
<div class="t h" style="left:624px;top:287px;font-size:10px">Y 위치</div>
<div class="t" style="left:687px;top:287px;font-size:10px">-74,673</div>
<div class="t h" style="left:624px;top:302px;font-size:10px">Z 위치</div>
<div class="t" style="left:687px;top:302px;font-size:10px">49,782</div>
<div class="t h" style="left:624px;top:316px;font-size:10px">위치</div>
<div class="a" style="left:685px;top:317px;width:70px;height:12px;background:linear-gradient(#FFFFFF,#ECECE4);border:1px solid #2E4E8A;border-radius:3px"></div>
<div class="t h" style="left:706px;top:317px;font-size:10px">배치...</div>
<div class="t h" style="left:614px;top:333px;color:#2458E4;font-size:10px">대상</div>
<div class="t h" style="left:624px;top:348px;font-size:10px">X 대상</div>
<div class="t" style="left:687px;top:348px;font-size:10px">0,000</div>
<div class="t h" style="left:624px;top:363px;font-size:10px">Y 대상</div>
<div class="t" style="left:687px;top:363px;font-size:10px">0,000</div>
<div class="t h" style="left:624px;top:377px;font-size:10px">Z 대상</div>
<div class="t" style="left:687px;top:377px;font-size:10px">0,000</div>
<div class="t h" style="left:624px;top:391px;font-size:10px">위치</div>
<div class="a" style="left:685px;top:391px;width:70px;height:12px;background:linear-gradient(#FFFFFF,#ECECE4);border:1px solid #2E4E8A;border-radius:3px"></div>
<div class="t h" style="left:706px;top:391px;font-size:10px">배치...</div>
<div class="t h" style="left:614px;top:408px;color:#2458E4;font-size:10px">배경무늬</div>
<div class="t h" style="left:624px;top:423px;font-size:10px">파일이름</div>
<div class="t h" style="left:687px;top:423px;font-size:10px">(없음)</div>
<div class="a" style="left:742px;top:424px;width:13px;height:12px;background:linear-gradient(#FFFFFF,#ECECE4);border:1px solid #2E4E8A;border-radius:3px"></div>
<div class="t" style="left:745px;top:424px;font-size:10px">...</div>
<div class="t h" style="left:624px;top:437px;font-size:10px">표시</div>
<div class="a" style="left:687px;top:438px;width:11px;height:11px;background:#F4F4F0;border:1px solid #1C5180"><svg style="left:1px;top:1px" width="8" height="8"><path d="M1 4 L3 6.5 L7 1.5" stroke="#21A121" stroke-width="1.8" fill="none"/></svg></div>
<div class="t h" style="left:624px;top:451px;font-size:10px">회색</div>
<div class="a" style="left:687px;top:452px;width:11px;height:11px;background:#F4F4F0;border:1px solid #1C5180"><svg style="left:1px;top:1px" width="8" height="8"><path d="M1 4 L3 6.5 L7 1.5" stroke="#21A121" stroke-width="1.8" fill="none"/></svg></div>
<svg style="left:0;top:0" width="764" height="573"><path d="M231.5 541 L256.5 541 L256.5 553 Q256.5 555 254.5 555 L239.5 555 L231.5 547 Z" fill="#ECECF4" stroke="#A8ACC0"/><path d="M191.5 541 L231.5 541 L231.5 553 Q231.5 555 229.5 555 L199.5 555 L191.5 547 Z" fill="#D6DAEA" stroke="#A8ACC0"/><path d="M153.5 541 L191.5 541 L191.5 553 Q191.5 555 189.5 555 L161.5 555 L153.5 547 Z" fill="#D6DAEA" stroke="#A8ACC0"/><path d="M120.5 541 L153.5 541 L153.5 553 Q153.5 555 151.5 555 L128.5 555 L120.5 547 Z" fill="#D6DAEA" stroke="#A8ACC0"/><path d="M53.5 541 L120.5 541 L120.5 553 Q120.5 555 118.5 555 L61.5 555 L53.5 547 Z" fill="#FFFFFF" stroke="#A8ACC0"/><path d="M243.5 545.5 h3 v3 h3 v3 h-3 v3 h-3 v-3 h-3 v-3 h3 Z" fill="#fff" stroke="#404048" stroke-width="1"/></svg>
<div class="t" id="f22" style="left:61.5px;top:542px;font-size:11.5px;transform:scaleX(0.8820);transform-origin:0 0;">Perspective</div>
<div class="t" id="f23" style="left:131px;top:542px;font-size:11.5px;transform:scaleX(0.9166);transform-origin:0 0;">Top</div>
<div class="t" id="f24" style="left:163.4px;top:542px;font-size:11.5px;transform:scaleX(0.8307);transform-origin:0 0;">Front</div>
<div class="t" id="f25" style="left:202px;top:542px;font-size:11.5px;transform:scaleX(0.8675);transform-origin:0 0;">Right</div>
<div class="a" style="left:2px;top:555px;width:759px;height:16px;background:#E6E5EE;border-top:1px solid #B0B0C4"></div>
<div class="a" style="left:570px;top:556px;width:53px;height:15px;background:#F2F5FC"></div>
<div class="a" style="left:47px;top:556px;width:1px;height:15px;background:#A8A8B8"></div>
<div class="a" style="left:101px;top:556px;width:1px;height:15px;background:#A8A8B8"></div>
<div class="a" style="left:156px;top:556px;width:1px;height:15px;background:#A8A8B8"></div>
<div class="a" style="left:211px;top:556px;width:1px;height:15px;background:#A8A8B8"></div>
<div class="a" style="left:263px;top:556px;width:1px;height:15px;background:#A8A8B8"></div>
<div class="a" style="left:369px;top:556px;width:1px;height:15px;background:#A8A8B8"></div>
<div class="a" style="left:428px;top:556px;width:1px;height:15px;background:#A8A8B8"></div>
<div class="a" style="left:475px;top:556px;width:1px;height:15px;background:#A8A8B8"></div>
<div class="a" style="left:524px;top:556px;width:1px;height:15px;background:#A8A8B8"></div>
<div class="a" style="left:570px;top:556px;width:1px;height:15px;background:#A8A8B8"></div>
<div class="a" style="left:623px;top:556px;width:1px;height:15px;background:#A8A8B8"></div>
<div class="a" style="left:650px;top:556px;width:1px;height:15px;background:#A8A8B8"></div>
<div class="a" style="left:720px;top:556px;width:1px;height:15px;background:#A8A8B8"></div>
<div class="a" style="left:746px;top:556px;width:1px;height:15px;background:#A8A8B8"></div>
<div class="t h" id="f26" style="left:6.5px;top:557px;font-size:10.5px;transform:scaleX(0.8409);transform-origin:0 0;">구성평면</div>
<div class="t" id="f27" style="left:61.5px;top:557px;font-size:10.5px;transform:scaleX(0.8417);transform-origin:0 0;">x 0.000</div>
<div class="t" id="f28" style="left:114px;top:557px;font-size:10.5px;transform:scaleX(0.9143);transform-origin:0 0;">y 0.000</div>
<div class="t" id="f29" style="left:168.8px;top:557px;font-size:10.5px;transform:scaleX(0.8911);transform-origin:0 0;">z 0.000</div>
<div class="t h" id="f30" style="left:217.5px;top:557px;font-size:10.5px;transform:scaleX(0.8977);transform-origin:0 0;">밀리미터</div>
<div class="t h" id="f31" style="left:280.3px;top:557px;font-size:10.5px;transform:scaleX(0.8394);transform-origin:0 0;">기본값</div>
<div class="t h" id="f32" style="left:374.6px;top:557px;font-size:10.5px;transform:scaleX(0.8529);transform-origin:0 0;">그리드 스냅</div>
<div class="t h" id="f33" style="left:433.7px;top:557px;font-size:10.5px;transform:scaleX(0.8364);transform-origin:0 0;">직교모드</div>
<div class="t h" id="f34" style="left:482px;top:557px;font-size:10.5px;transform:scaleX(0.8068);transform-origin:0 0;">평면모드</div>
<div class="t h" id="f35" style="left:528px;top:557px;font-size:10.5px;transform:scaleX(0.8364);transform-origin:0 0;">개체스냅</div>
<div class="t" id="f36" style="left:573px;top:557px;font-size:10.5px;transform:scaleX(1.0432);transform-origin:0 0;"><b>SmartTra</b></div>
<div class="t h" id="f37" style="left:626.8px;top:557px;font-size:10.5px;transform:scaleX(0.9091);transform-origin:0 0;">검볼</div>
<div class="t h" id="f38" style="left:655.6px;top:557px;font-size:10.5px;transform:scaleX(0.8764);transform-origin:0 0;">히스토리 기록</div>
<div class="t h" id="f39" style="left:721px;top:557px;font-size:10.5px;transform:scaleX(0.9636);transform-origin:0 0;">필터</div>
<div class="a" style="left:267px;top:558px;width:12px;height:11px;background:#000"></div>
</body></html>
